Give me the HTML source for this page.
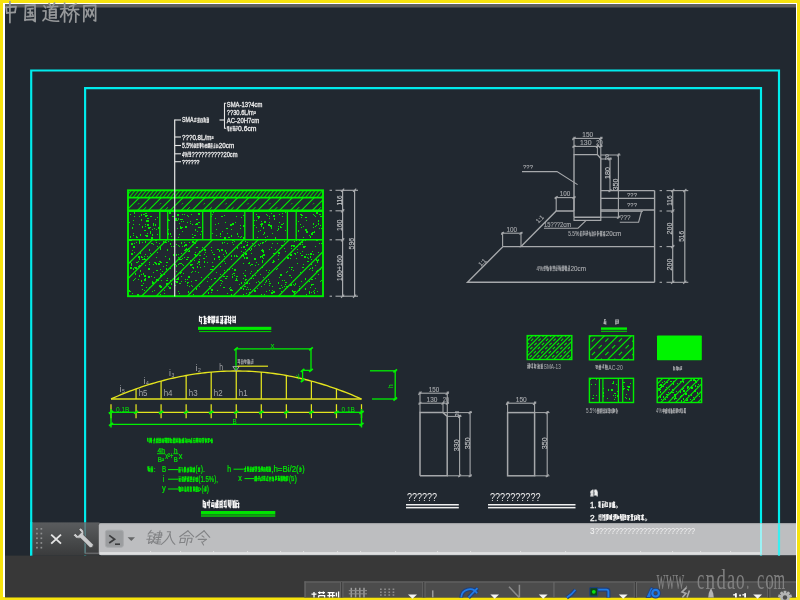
<!DOCTYPE html>
<html><head><meta charset="utf-8"><title>CAD</title>
<style>
html,body{margin:0;padding:0;width:800px;height:600px;overflow:hidden;background:#f7e30e;font-family:"Liberation Sans",sans-serif;}
svg{position:absolute;left:0;top:0;display:block;will-change:transform}
text{white-space:pre}
</style></head><body>
<svg width="800" height="600" viewBox="0 0 800 600">
<rect x="0" y="0" width="800" height="600" fill="#f7e30e"/>
<rect x="3" y="3" width="794" height="594" fill="#ffffff"/>
<rect x="5" y="4.3" width="791" height="593" fill="#212830"/>
<rect x="5" y="4.3" width="791" height="3.2" fill="#5e5e5e"/>
<g fill="none" stroke="#00ecec" stroke-width="2.15">
<polyline points="31.2,556 31.2,70.5 779,70.5 779,556"/>
<polyline points="85.1,556 85.1,88.1 761,88.1 761,556"/>
</g>
<clipPath id="c1"><rect x="128" y="190.3" width="195" height="7.299999999999983"/></clipPath>
<g clip-path="url(#c1)" stroke="#00d200" stroke-width="1.05"><line x1="116.40" y1="199.60" x2="125.44" y2="188.30"/><line x1="120.15" y1="199.60" x2="129.19" y2="188.30"/><line x1="123.90" y1="199.60" x2="132.94" y2="188.30"/><line x1="127.65" y1="199.60" x2="136.69" y2="188.30"/><line x1="131.40" y1="199.60" x2="140.44" y2="188.30"/><line x1="135.15" y1="199.60" x2="144.19" y2="188.30"/><line x1="138.90" y1="199.60" x2="147.94" y2="188.30"/><line x1="142.65" y1="199.60" x2="151.69" y2="188.30"/><line x1="146.40" y1="199.60" x2="155.44" y2="188.30"/><line x1="150.15" y1="199.60" x2="159.19" y2="188.30"/><line x1="153.90" y1="199.60" x2="162.94" y2="188.30"/><line x1="157.65" y1="199.60" x2="166.69" y2="188.30"/><line x1="161.40" y1="199.60" x2="170.44" y2="188.30"/><line x1="165.15" y1="199.60" x2="174.19" y2="188.30"/><line x1="168.90" y1="199.60" x2="177.94" y2="188.30"/><line x1="172.65" y1="199.60" x2="181.69" y2="188.30"/><line x1="176.40" y1="199.60" x2="185.44" y2="188.30"/><line x1="180.15" y1="199.60" x2="189.19" y2="188.30"/><line x1="183.90" y1="199.60" x2="192.94" y2="188.30"/><line x1="187.65" y1="199.60" x2="196.69" y2="188.30"/><line x1="191.40" y1="199.60" x2="200.44" y2="188.30"/><line x1="195.15" y1="199.60" x2="204.19" y2="188.30"/><line x1="198.90" y1="199.60" x2="207.94" y2="188.30"/><line x1="202.65" y1="199.60" x2="211.69" y2="188.30"/><line x1="206.40" y1="199.60" x2="215.44" y2="188.30"/><line x1="210.15" y1="199.60" x2="219.19" y2="188.30"/><line x1="213.90" y1="199.60" x2="222.94" y2="188.30"/><line x1="217.65" y1="199.60" x2="226.69" y2="188.30"/><line x1="221.40" y1="199.60" x2="230.44" y2="188.30"/><line x1="225.15" y1="199.60" x2="234.19" y2="188.30"/><line x1="228.90" y1="199.60" x2="237.94" y2="188.30"/><line x1="232.65" y1="199.60" x2="241.69" y2="188.30"/><line x1="236.40" y1="199.60" x2="245.44" y2="188.30"/><line x1="240.15" y1="199.60" x2="249.19" y2="188.30"/><line x1="243.90" y1="199.60" x2="252.94" y2="188.30"/><line x1="247.65" y1="199.60" x2="256.69" y2="188.30"/><line x1="251.40" y1="199.60" x2="260.44" y2="188.30"/><line x1="255.15" y1="199.60" x2="264.19" y2="188.30"/><line x1="258.90" y1="199.60" x2="267.94" y2="188.30"/><line x1="262.65" y1="199.60" x2="271.69" y2="188.30"/><line x1="266.40" y1="199.60" x2="275.44" y2="188.30"/><line x1="270.15" y1="199.60" x2="279.19" y2="188.30"/><line x1="273.90" y1="199.60" x2="282.94" y2="188.30"/><line x1="277.65" y1="199.60" x2="286.69" y2="188.30"/><line x1="281.40" y1="199.60" x2="290.44" y2="188.30"/><line x1="285.15" y1="199.60" x2="294.19" y2="188.30"/><line x1="288.90" y1="199.60" x2="297.94" y2="188.30"/><line x1="292.65" y1="199.60" x2="301.69" y2="188.30"/><line x1="296.40" y1="199.60" x2="305.44" y2="188.30"/><line x1="300.15" y1="199.60" x2="309.19" y2="188.30"/><line x1="303.90" y1="199.60" x2="312.94" y2="188.30"/><line x1="307.65" y1="199.60" x2="316.69" y2="188.30"/><line x1="311.40" y1="199.60" x2="320.44" y2="188.30"/><line x1="315.15" y1="199.60" x2="324.19" y2="188.30"/><line x1="318.90" y1="199.60" x2="327.94" y2="188.30"/><line x1="322.65" y1="199.60" x2="331.69" y2="188.30"/></g>
<clipPath id="c2"><rect x="128" y="197.6" width="195" height="13.200000000000017"/></clipPath>
<g clip-path="url(#c2)" stroke="#00f000" stroke-width="1.1"><line x1="113.24" y1="212.80" x2="130.44" y2="195.60"/><line x1="124.17" y1="212.80" x2="141.37" y2="195.60"/><line x1="135.10" y1="212.80" x2="152.30" y2="195.60"/><line x1="146.03" y1="212.80" x2="163.23" y2="195.60"/><line x1="156.96" y1="212.80" x2="174.16" y2="195.60"/><line x1="167.89" y1="212.80" x2="185.09" y2="195.60"/><line x1="178.82" y1="212.80" x2="196.02" y2="195.60"/><line x1="189.75" y1="212.80" x2="206.95" y2="195.60"/><line x1="200.68" y1="212.80" x2="217.88" y2="195.60"/><line x1="211.61" y1="212.80" x2="228.81" y2="195.60"/><line x1="222.54" y1="212.80" x2="239.74" y2="195.60"/><line x1="233.47" y1="212.80" x2="250.67" y2="195.60"/><line x1="244.40" y1="212.80" x2="261.60" y2="195.60"/><line x1="255.33" y1="212.80" x2="272.53" y2="195.60"/><line x1="266.26" y1="212.80" x2="283.46" y2="195.60"/><line x1="277.19" y1="212.80" x2="294.39" y2="195.60"/><line x1="288.12" y1="212.80" x2="305.32" y2="195.60"/><line x1="299.05" y1="212.80" x2="316.25" y2="195.60"/><line x1="309.98" y1="212.80" x2="327.18" y2="195.60"/><line x1="320.91" y1="212.80" x2="338.11" y2="195.60"/></g>
<clipPath id="c3"><rect x="128" y="197.6" width="195" height="13.200000000000017"/></clipPath>
<g clip-path="url(#c3)" stroke="#00f000" stroke-width="1.0" stroke-dasharray="0 3 5 20"><line x1="118.64" y1="212.80" x2="135.84" y2="195.60"/><line x1="140.50" y1="212.80" x2="157.70" y2="195.60"/><line x1="162.36" y1="212.80" x2="179.56" y2="195.60"/><line x1="184.22" y1="212.80" x2="201.42" y2="195.60"/><line x1="206.08" y1="212.80" x2="223.28" y2="195.60"/><line x1="227.94" y1="212.80" x2="245.14" y2="195.60"/><line x1="249.80" y1="212.80" x2="267.00" y2="195.60"/><line x1="271.66" y1="212.80" x2="288.86" y2="195.60"/><line x1="293.52" y1="212.80" x2="310.72" y2="195.60"/><line x1="315.38" y1="212.80" x2="332.58" y2="195.60"/></g>
<clipPath id="c4"><rect x="128" y="197.6" width="195" height="13.200000000000017"/></clipPath>
<g clip-path="url(#c4)" stroke="#00f000" stroke-width="1.0" stroke-dasharray="0 12 1.6 20"><line x1="129.57" y1="212.80" x2="146.77" y2="195.60"/><line x1="151.43" y1="212.80" x2="168.63" y2="195.60"/><line x1="173.29" y1="212.80" x2="190.49" y2="195.60"/><line x1="195.15" y1="212.80" x2="212.35" y2="195.60"/><line x1="217.01" y1="212.80" x2="234.21" y2="195.60"/><line x1="238.87" y1="212.80" x2="256.07" y2="195.60"/><line x1="260.73" y1="212.80" x2="277.93" y2="195.60"/><line x1="282.59" y1="212.80" x2="299.79" y2="195.60"/><line x1="304.45" y1="212.80" x2="321.65" y2="195.60"/></g>
<path fill="#00e800" d="M211 216h1v1h-1zM141 214h1v2h-1zM153 223h1v1h-1zM258 218h1v1h-1zM240 225h1v1h-1zM152 229h1v1h-1zM273 215h2v2h-2zM290 232h1v1h-1zM144 230h1v1h-1zM141 219h1v1h-1zM163 221h1v1h-1zM267 215h1v1h-1zM272 233h1v1h-1zM277 230h1v1h-1zM224 215h1v1h-1zM145 230h1v1h-1zM181 227h2v1h-2zM238 236h1v1h-1zM278 226h1v1h-1zM192 237h1v1h-1zM191 214h1v1h-1zM263 227h1v2h-1zM315 226h1v1h-1zM147 215h1v1h-1zM171 236h1v1h-1zM254 225h1v1h-1zM300 214h2v1h-2zM275 237h1v2h-1zM209 222h2v1h-2zM281 227h1v1h-1zM245 214h1v2h-1zM198 227h2v1h-2zM145 213h2v1h-2zM208 232h1v1h-1zM303 226h1v1h-1zM227 233h1v1h-1zM247 223h1v1h-1zM158 227h1v1h-1zM202 216h2v1h-2zM230 224h2v2h-2zM256 214h1v1h-1zM231 229h1v1h-1zM164 225h1v2h-1zM200 234h1v1h-1zM220 233h1v2h-1zM188 216h1v1h-1zM167 219h1v1h-1zM132 227h1v2h-1zM175 220h1v1h-1zM166 225h1v1h-1zM285 230h1v1h-1zM161 234h1v2h-1zM287 232h2v1h-2zM142 226h1v2h-1zM303 237h1v1h-1zM230 224h1v1h-1zM252 232h1v1h-1zM177 214h2v2h-2zM241 217h1v1h-1zM282 213h1v1h-1zM274 216h1v1h-1zM222 231h1v1h-1zM182 231h1v1h-1zM291 220h2v2h-2zM283 223h1v1h-1zM158 227h2v2h-2zM248 227h1v1h-1zM150 216h1v1h-1zM216 235h1v1h-1zM306 217h1v1h-1zM181 228h1v1h-1zM305 229h2v2h-2zM264 221h2v2h-2zM152 234h1v2h-1zM261 223h2v2h-2zM220 236h1v1h-1zM267 236h1v1h-1zM291 219h1v1h-1zM178 237h1v1h-1zM231 235h1v2h-1zM180 228h1v1h-1zM316 212h2v2h-2zM200 227h1v1h-1zM306 231h2v2h-2zM243 237h2v2h-2zM218 223h1v1h-1zM155 219h1v1h-1zM215 218h1v1h-1zM285 212h1v1h-1zM296 223h1v2h-1zM150 233h1v1h-1zM228 237h2v1h-2zM180 227h1v2h-1zM240 237h1v1h-1zM151 237h2v2h-2zM313 224h1v1h-1zM319 214h2v1h-2zM172 216h1v1h-1zM280 226h1v2h-1zM166 231h1v2h-1zM250 233h2v2h-2zM168 229h1v1h-1zM134 212h1v2h-1zM314 232h1v1h-1zM320 216h1v1h-1zM178 218h1v1h-1zM183 221h1v1h-1zM279 222h1v1h-1zM236 216h1v1h-1zM318 223h1v2h-1zM298 230h1v2h-1zM261 225h1v2h-1zM257 216h1v1h-1zM263 228h1v1h-1zM241 236h1v1h-1zM130 236h1v2h-1zM173 216h1v1h-1zM314 215h1v1h-1zM212 233h1v1h-1zM271 227h1v2h-1zM156 229h1v1h-1zM177 220h1v1h-1zM154 228h1v1h-1zM136 236h1v2h-1zM145 226h1v1h-1zM258 231h1v1h-1zM306 220h1v1h-1zM265 237h1v1h-1zM192 234h1v1h-1zM195 229h1v2h-1zM180 226h1v1h-1zM160 224h1v1h-1zM147 233h1v1h-1zM147 218h2v1h-2zM160 236h1v1h-1zM312 232h2v1h-2zM165 220h1v2h-1zM248 219h2v1h-2zM153 224h1v2h-1zM170 233h1v2h-1zM170 234h1v1h-1zM260 224h1v1h-1zM179 223h1v1h-1zM313 223h1v1h-1zM270 226h1v1h-1zM133 224h1v1h-1zM288 221h1v1h-1zM145 215h2v2h-2zM187 215h1v1h-1zM198 213h2v2h-2zM175 220h2v1h-2zM237 233h1v2h-1zM195 224h1v1h-1zM260 230h1v1h-1zM212 214h1v1h-1zM305 217h1v1h-1zM147 220h2v2h-2zM291 214h1v2h-1zM150 231h1v2h-1zM146 220h1v2h-1zM245 212h1v1h-1zM270 225h2v2h-2zM197 231h1v1h-1zM263 234h1v1h-1zM157 217h1v1h-1zM175 218h2v2h-2zM289 221h1v1h-1zM181 221h1v1h-1zM301 217h1v1h-1zM133 220h1v1h-1zM133 235h1v1h-1zM177 228h1v1h-1zM243 215h1v1h-1zM295 225h1v1h-1zM268 224h2v2h-2zM207 234h1v1h-1zM187 222h1v1h-1zM309 235h1v1h-1zM232 223h2v2h-2zM162 212h1v1h-1zM318 220h1v1h-1zM143 214h2v1h-2zM226 228h2v1h-2zM201 231h1v1h-1zM204 213h1v1h-1zM169 220h1v1h-1zM196 223h2v2h-2zM269 222h1v1h-1zM208 218h1v1h-1zM129 222h1v1h-1zM250 220h1v1h-1zM180 219h1v1h-1zM130 214h1v1h-1zM151 216h1v1h-1zM139 224h1v1h-1zM206 232h1v1h-1zM278 228h1v2h-1zM168 233h1v2h-1zM281 224h2v1h-2zM313 227h1v1h-1zM314 231h1v1h-1zM140 234h1v2h-1zM289 225h2v1h-2zM258 216h2v2h-2zM321 228h1v1h-1zM133 233h1v1h-1zM311 233h2v2h-2zM293 219h1v1h-1zM139 216h1v1h-1zM155 224h1v2h-1zM271 213h1v1h-1zM289 229h2v1h-2zM254 220h1v1h-1zM146 235h2v2h-2zM266 214h1v1h-1zM145 235h2v1h-2zM193 237h1v1h-1zM196 219h2v1h-2zM181 219h2v1h-2zM246 227h1v2h-1zM148 227h2v2h-2zM202 236h1v1h-1zM290 232h1v1h-1zM282 216h1v1h-1zM295 235h2v1h-2zM288 230h1v1h-1zM252 213h1v1h-1zM301 215h2v1h-2zM301 227h1v1h-1zM261 221h1v1h-1zM248 236h1v1h-1zM269 218h1v1h-1zM150 227h1v1h-1zM246 214h1v2h-1zM244 220h1v1h-1zM182 214h1v1h-1zM165 235h1v1h-1zM221 216h1v1h-1zM290 228h1v1h-1zM157 234h1v1h-1zM256 227h1v1h-1zM169 212h2v2h-2zM303 226h1v1h-1zM315 216h1v1h-1zM225 222h1v1h-1zM213 212h1v1h-1zM215 224h1v1h-1zM179 234h1v1h-1zM318 221h1v1h-1zM145 224h1v1h-1zM279 214h1v1h-1zM238 236h1v1h-1zM141 220h1v1h-1zM298 221h1v1h-1zM167 219h2v2h-2zM240 228h1v1h-1zM224 237h2v2h-2zM136 237h2v1h-2zM231 229h1v1h-1zM313 214h1v1h-1zM316 225h1v1h-1zM321 216h1v1h-1zM202 227h1v1h-1zM269 216h1v1h-1zM235 222h1v1h-1zM194 235h2v1h-2zM296 220h1v1h-1zM190 221h1v1h-1zM300 224h1v1h-1zM293 217h1v1h-1zM257 237h1v1h-1zM185 226h2v2h-2zM244 225h1v1h-1zM178 219h1v1h-1zM216 229h1v1h-1zM190 223h1v1h-1zM274 218h1v2h-1zM320 225h1v1h-1zM319 228h1v1h-1zM198 222h2v1h-2zM256 220h1v1h-1zM221 216h2v1h-2zM264 232h1v2h-1zM184 214h1v1h-1zM192 224h1v1h-1zM243 225h2v2h-2zM134 216h1v1h-1zM310 236h1v2h-1zM250 230h1v1h-1zM147 224h2v2h-2z"/>
<rect x="159.80" y="210.80" width="7.90" height="29.00" fill="#212830" />
<line x1="159.80" y1="210.80" x2="159.80" y2="239.80" stroke="#00f000" stroke-width="1.3" />
<line x1="167.70" y1="210.80" x2="167.70" y2="239.80" stroke="#00f000" stroke-width="1.3" />
<rect x="202.70" y="210.80" width="8.20" height="29.00" fill="#212830" />
<line x1="202.70" y1="210.80" x2="202.70" y2="239.80" stroke="#00f000" stroke-width="1.3" />
<line x1="210.90" y1="210.80" x2="210.90" y2="239.80" stroke="#00f000" stroke-width="1.3" />
<rect x="244.80" y="210.80" width="8.50" height="29.00" fill="#212830" />
<line x1="244.80" y1="210.80" x2="244.80" y2="239.80" stroke="#00f000" stroke-width="1.3" />
<line x1="253.30" y1="210.80" x2="253.30" y2="239.80" stroke="#00f000" stroke-width="1.3" />
<rect x="287.40" y="210.80" width="8.80" height="29.00" fill="#212830" />
<line x1="287.40" y1="210.80" x2="287.40" y2="239.80" stroke="#00f000" stroke-width="1.3" />
<line x1="296.20" y1="210.80" x2="296.20" y2="239.80" stroke="#00f000" stroke-width="1.3" />
<clipPath id="c5"><rect x="128" y="239.8" width="195" height="56.39999999999998"/></clipPath>
<g clip-path="url(#c5)" stroke="#00f000" stroke-width="1.2"><line x1="48.40" y1="298.20" x2="108.80" y2="237.80"/><line x1="94.00" y1="298.20" x2="154.40" y2="237.80"/><line x1="139.60" y1="298.20" x2="200.00" y2="237.80"/><line x1="185.20" y1="298.20" x2="245.60" y2="237.80"/><line x1="230.80" y1="298.20" x2="291.20" y2="237.80"/><line x1="276.40" y1="298.20" x2="336.80" y2="237.80"/><line x1="322.00" y1="298.20" x2="382.40" y2="237.80"/><line x1="62.90" y1="298.20" x2="123.30" y2="237.80"/><line x1="108.50" y1="298.20" x2="168.90" y2="237.80"/><line x1="154.10" y1="298.20" x2="214.50" y2="237.80"/><line x1="199.70" y1="298.20" x2="260.10" y2="237.80"/><line x1="245.30" y1="298.20" x2="305.70" y2="237.80"/><line x1="290.90" y1="298.20" x2="351.30" y2="237.80"/><line x1="336.50" y1="298.20" x2="396.90" y2="237.80"/></g>
<path fill="#00e800" d="M264 294h1v1h-1zM243 255h1v2h-1zM186 249h1v1h-1zM303 246h2v2h-2zM313 284h1v1h-1zM246 245h1v1h-1zM139 240h1v2h-1zM188 276h2v2h-2zM294 285h1v1h-1zM161 280h1v1h-1zM291 267h2v1h-2zM157 246h1v1h-1zM263 277h1v1h-1zM195 254h1v2h-1zM129 240h1v1h-1zM246 257h2v2h-2zM294 293h1v2h-1zM250 273h1v1h-1zM192 241h2v2h-2zM309 281h1v1h-1zM134 252h1v1h-1zM301 281h1v1h-1zM194 254h2v1h-2zM223 254h1v1h-1zM307 261h2v1h-2zM221 283h1v1h-1zM130 291h1v1h-1zM258 244h1v1h-1zM180 259h2v1h-2zM178 254h1v1h-1zM196 288h1v2h-1zM156 279h1v1h-1zM176 254h1v1h-1zM299 243h2v2h-2zM166 265h1v1h-1zM135 278h1v1h-1zM142 285h1v1h-1zM229 268h1v2h-1zM209 286h1v1h-1zM149 250h1v1h-1zM176 281h2v2h-2zM320 269h1v1h-1zM299 286h1v1h-1zM224 261h1v1h-1zM156 240h1v1h-1zM149 262h1v1h-1zM160 275h2v2h-2zM182 264h1v1h-1zM208 292h1v2h-1zM151 243h2v1h-2zM179 263h1v1h-1zM243 252h1v1h-1zM317 270h1v1h-1zM234 255h1v2h-1zM232 242h1v1h-1zM247 244h1v2h-1zM144 256h1v1h-1zM145 278h1v1h-1zM198 261h2v2h-2zM286 242h1v1h-1zM312 284h1v1h-1zM199 259h1v1h-1zM281 291h1v1h-1zM145 241h1v2h-1zM156 270h2v1h-2zM248 289h1v1h-1zM193 267h1v2h-1zM162 271h1v1h-1zM318 259h1v2h-1zM167 278h1v1h-1zM210 269h1v1h-1zM281 245h1v1h-1zM229 288h1v1h-1zM233 244h1v1h-1zM252 275h1v1h-1zM170 267h1v2h-1zM147 256h1v1h-1zM182 246h1v1h-1zM310 268h1v1h-1zM163 266h1v1h-1zM301 255h2v1h-2zM299 288h1v1h-1zM204 258h1v1h-1zM197 263h1v1h-1zM195 252h1v1h-1zM176 255h1v1h-1zM201 277h1v1h-1zM145 265h1v1h-1zM191 272h1v1h-1zM295 291h1v1h-1zM247 242h1v1h-1zM250 292h1v1h-1zM243 263h1v1h-1zM204 254h1v1h-1zM177 278h2v2h-2zM278 252h2v2h-2zM224 272h1v2h-1zM243 278h1v1h-1zM299 240h1v1h-1zM281 285h1v1h-1zM184 242h1v1h-1zM165 242h1v1h-1zM194 242h1v1h-1zM295 253h1v2h-1zM212 266h2v1h-2zM176 279h1v1h-1zM181 242h1v2h-1zM269 270h1v1h-1zM154 290h1v1h-1zM269 249h1v1h-1zM152 281h1v1h-1zM307 257h1v1h-1zM201 282h1v1h-1zM142 259h2v1h-2zM220 266h1v1h-1zM222 281h1v1h-1zM315 265h1v1h-1zM130 267h2v2h-2zM237 247h1v2h-1zM232 276h1v2h-1zM246 289h1v1h-1zM132 243h1v1h-1zM293 291h2v2h-2zM151 276h1v1h-1zM223 287h1v1h-1zM166 262h1v1h-1zM262 250h2v2h-2zM156 264h1v1h-1zM179 259h1v1h-1zM140 270h1v1h-1zM284 280h1v1h-1zM311 279h2v1h-2zM170 280h1v2h-1zM185 279h1v1h-1zM179 293h1v1h-1zM273 253h1v1h-1zM261 250h1v1h-1zM160 249h1v1h-1zM314 292h1v2h-1zM139 275h1v2h-1zM301 242h2v1h-2zM211 247h1v1h-1zM245 275h1v2h-1zM207 281h1v1h-1zM278 255h1v1h-1zM297 263h1v1h-1zM241 251h1v1h-1zM287 271h1v1h-1zM243 288h1v1h-1zM246 293h1v1h-1zM250 265h1v1h-1zM161 262h1v1h-1zM152 291h1v1h-1zM259 282h1v1h-1zM291 248h1v1h-1zM316 260h2v1h-2zM259 245h1v1h-1zM258 264h1v1h-1zM163 241h1v2h-1zM286 286h2v1h-2zM157 252h1v1h-1zM254 258h2v2h-2zM171 283h1v2h-1zM185 244h1v2h-1zM285 288h1v1h-1zM211 279h1v1h-1zM245 249h1v1h-1zM251 253h1v1h-1zM286 272h1v1h-1zM224 242h1v1h-1zM232 250h1v1h-1zM200 283h1v1h-1zM225 250h1v2h-1zM196 247h2v1h-2zM141 280h1v2h-1zM244 275h1v1h-1zM305 246h1v1h-1zM266 280h1v2h-1zM317 291h1v1h-1zM225 263h1v1h-1zM221 261h2v1h-2zM242 254h1v1h-1zM319 243h1v1h-1zM261 256h1v1h-1zM278 282h1v2h-1zM316 240h2v1h-2zM185 249h1v1h-1zM289 267h1v1h-1zM222 243h1v1h-1zM187 279h1v1h-1zM134 243h1v1h-1zM219 259h1v1h-1zM220 274h1v1h-1zM278 259h1v1h-1zM181 263h1v1h-1zM250 250h1v1h-1zM191 285h1v1h-1zM153 244h1v1h-1zM299 290h1v1h-1zM196 240h1v1h-1zM272 262h1v1h-1zM277 268h1v1h-1zM261 286h1v1h-1zM171 240h1v1h-1zM265 241h1v1h-1zM189 250h1v1h-1zM155 240h1v1h-1zM297 252h1v1h-1zM180 273h1v1h-1zM258 281h1v1h-1zM285 251h1v1h-1zM145 259h1v1h-1zM314 290h1v1h-1zM266 240h1v1h-1zM240 287h2v2h-2zM149 287h1v1h-1zM173 254h2v2h-2zM195 254h1v1h-1zM160 261h1v2h-1zM306 294h1v1h-1zM142 257h1v1h-1zM302 267h2v1h-2zM262 256h1v1h-1zM184 245h1v2h-1zM132 250h1v1h-1zM189 293h2v1h-2zM169 287h2v2h-2zM178 264h1v1h-1zM190 264h2v2h-2zM290 284h2v2h-2zM266 270h1v1h-1zM264 284h1v1h-1zM135 267h2v2h-2zM188 276h1v2h-1zM183 265h1v1h-1zM148 276h2v2h-2zM166 242h1v1h-1zM156 279h2v2h-2zM217 249h2v1h-2zM136 242h1v1h-1zM293 280h1v1h-1zM146 287h1v1h-1zM280 288h1v1h-1zM265 282h1v1h-1zM311 264h1v1h-1zM181 253h1v1h-1zM137 294h2v2h-2zM321 280h1v1h-1zM321 280h1v1h-1zM251 246h1v1h-1zM294 253h1v1h-1zM215 267h1v1h-1zM218 256h2v2h-2zM141 285h2v1h-2zM211 289h2v2h-2zM257 270h1v2h-1zM287 287h1v1h-1zM234 241h1v1h-1zM154 262h1v1h-1zM141 274h1v1h-1zM311 292h1v1h-1zM202 250h1v1h-1zM263 252h1v1h-1zM321 243h1v1h-1zM254 246h1v1h-1zM176 271h1v1h-1zM260 256h1v1h-1zM169 258h1v2h-1zM308 254h1v1h-1zM157 280h2v1h-2zM254 290h2v2h-2zM272 290h1v1h-1zM212 262h1v1h-1zM230 287h1v1h-1zM294 241h1v1h-1zM206 256h1v1h-1zM268 272h1v1h-1zM290 254h2v2h-2zM161 274h1v1h-1zM305 288h1v1h-1zM137 262h1v1h-1zM262 249h1v2h-1zM244 282h1v1h-1zM211 250h1v1h-1zM305 289h1v1h-1zM188 248h1v1h-1zM293 284h1v1h-1zM178 257h1v1h-1zM309 292h1v2h-1zM168 286h1v1h-1zM192 286h1v1h-1zM262 262h1v1h-1zM212 252h1v1h-1zM315 246h1v1h-1zM297 246h1v1h-1zM167 249h1v2h-1zM316 259h1v1h-1zM179 246h1v1h-1zM156 257h1v1h-1zM228 269h1v1h-1zM231 294h1v2h-1zM306 254h1v1h-1zM290 258h1v1h-1zM165 256h1v1h-1zM232 240h2v1h-2zM239 284h1v1h-1zM320 281h1v1h-1zM187 282h2v1h-2zM293 284h1v1h-1zM187 283h1v1h-1zM160 269h1v1h-1zM195 280h2v1h-2zM236 255h1v2h-1zM311 285h1v1h-1zM193 294h1v1h-1zM245 241h1v1h-1zM233 273h2v1h-2zM175 281h1v1h-1zM131 264h1v2h-1zM156 242h1v1h-1zM184 250h2v1h-2zM180 273h1v1h-1zM276 269h1v1h-1zM312 270h1v1h-1zM292 290h1v2h-1zM262 261h1v1h-1zM245 253h2v2h-2zM176 265h1v1h-1zM160 286h2v2h-2zM220 280h1v1h-1zM199 264h1v1h-1zM132 244h1v1h-1zM236 280h2v1h-2zM219 277h1v1h-1zM186 259h2v1h-2zM263 254h2v2h-2zM229 269h1v1h-1zM162 289h1v1h-1zM291 252h1v1h-1zM272 286h1v1h-1zM166 262h2v1h-2zM234 269h2v2h-2zM269 281h1v1h-1zM249 262h1v2h-1zM187 257h2v1h-2zM304 256h2v2h-2zM302 251h1v1h-1zM313 291h1v1h-1zM191 281h1v1h-1zM251 271h1v1h-1zM292 245h1v1h-1zM221 249h2v2h-2zM227 243h1v1h-1zM273 260h1v2h-1zM164 273h1v2h-1zM291 277h1v1h-1zM131 253h2v2h-2zM296 258h1v1h-1zM154 277h1v1h-1zM188 251h2v1h-2zM217 290h1v1h-1zM232 290h1v1h-1zM285 284h1v1h-1zM152 282h2v2h-2zM269 290h1v1h-1zM205 252h1v1h-1zM183 273h1v1h-1zM241 282h1v2h-1zM271 247h1v1h-1zM188 292h1v1h-1zM255 275h1v1h-1zM248 249h2v1h-2zM192 271h1v1h-1zM282 287h1v1h-1zM211 269h2v1h-2zM256 282h1v1h-1zM248 263h1v1h-1zM302 244h1v1h-1zM221 280h1v1h-1zM134 279h1v1h-1zM317 261h1v2h-1zM153 272h1v1h-1zM165 242h1v1h-1zM235 280h1v1h-1zM153 282h1v1h-1zM250 289h1v1h-1zM182 258h1v1h-1zM237 256h1v1h-1zM203 258h1v1h-1zM255 265h1v1h-1zM198 272h1v1h-1zM181 281h1v1h-1zM159 261h1v1h-1zM311 259h1v1h-1zM291 245h1v2h-1zM139 265h2v1h-2zM232 274h1v1h-1zM231 259h1v1h-1zM140 252h1v2h-1zM250 278h2v1h-2zM144 290h1v1h-1zM268 279h1v1h-1zM166 280h2v1h-2zM305 278h1v2h-1zM150 253h1v1h-1zM291 269h1v1h-1zM173 246h2v1h-2zM138 266h2v1h-2zM296 240h1v1h-1zM164 290h1v1h-1zM310 256h1v2h-1zM176 266h1v1h-1zM134 267h1v1h-1zM277 243h1v1h-1zM262 242h1v2h-1zM236 276h2v1h-2zM232 268h1v1h-1zM303 264h1v1h-1zM297 249h1v1h-1zM234 275h1v1h-1zM293 270h1v1h-1zM167 280h1v1h-1zM130 240h2v1h-2zM160 294h1v1h-1zM160 248h1v1h-1zM199 286h1v1h-1zM244 286h2v1h-2zM141 263h2v1h-2zM311 284h1v2h-1zM315 288h1v1h-1zM289 275h2v1h-2zM246 282h2v2h-2zM194 243h2v1h-2zM131 243h1v1h-1zM295 283h1v2h-1zM149 264h1v1h-1zM315 278h1v1h-1zM253 278h1v1h-1zM223 276h2v1h-2zM249 283h1v1h-1zM158 263h2v2h-2zM170 280h1v2h-1zM251 264h2v1h-2zM244 257h1v2h-1zM274 261h1v1h-1zM144 279h2v2h-2zM309 291h1v2h-1zM214 278h2v1h-2zM132 293h1v1h-1zM208 277h1v1h-1zM192 264h1v1h-1zM225 278h2v1h-2zM188 291h1v1h-1zM305 240h1v1h-1zM197 267h1v1h-1zM139 258h1v2h-1zM275 249h1v1h-1zM269 283h2v1h-2zM256 262h1v1h-1zM267 275h1v1h-1zM226 252h1v2h-1zM313 254h1v1h-1zM143 283h1v1h-1zM310 253h2v2h-2zM279 288h1v1h-1zM227 269h1v1h-1zM266 291h1v1h-1zM145 254h1v1h-1zM262 256h1v2h-1zM262 260h1v1h-1zM279 252h1v1h-1zM178 245h1v1h-1zM308 258h1v1h-1zM273 262h1v1h-1zM261 294h1v1h-1zM140 271h1v1h-1zM156 263h1v1h-1zM149 249h1v1h-1zM136 262h1v1h-1zM284 241h1v1h-1zM181 276h1v1h-1zM274 253h1v1h-1zM200 267h1v1h-1zM243 289h1v1h-1zM284 248h1v1h-1zM138 261h1v1h-1zM175 264h1v1h-1zM142 242h1v1h-1zM309 269h1v1h-1zM145 278h1v1h-1zM159 285h2v2h-2zM194 260h1v1h-1zM293 245h2v2h-2zM300 272h1v1h-1zM243 294h1v1h-1zM189 286h1v1h-1zM138 256h2v2h-2zM144 275h2v2h-2zM141 256h1v2h-1zM310 287h1v1h-1zM252 243h1v1h-1zM210 288h1v1h-1zM179 283h2v1h-2zM279 277h1v1h-1zM296 246h1v1h-1zM224 256h1v1h-1zM224 270h1v1h-1zM241 255h1v2h-1zM302 240h1v1h-1zM178 291h1v1h-1zM185 244h2v2h-2zM224 287h1v1h-1zM243 246h2v2h-2zM227 293h1v1h-1zM148 268h2v2h-2zM211 292h1v1h-1zM158 280h1v1h-1zM213 254h2v1h-2zM175 285h1v1h-1zM166 268h1v2h-1zM197 266h1v1h-1zM168 241h1v1h-1zM204 261h1v2h-1zM195 271h1v1h-1zM245 270h1v1h-1zM260 243h1v1h-1zM300 253h1v1h-1zM202 247h1v1h-1zM180 263h1v1h-1zM195 255h2v2h-2zM153 264h1v1h-1zM170 243h1v2h-1zM204 249h2v2h-2zM133 268h1v2h-1zM216 272h1v1h-1zM129 290h1v2h-1zM263 258h1v1h-1zM240 242h2v2h-2zM184 257h1v1h-1zM164 293h1v1h-1zM187 285h1v1h-1zM282 245h1v2h-1zM284 286h1v1h-1zM199 251h1v1h-1zM285 282h2v1h-2zM178 277h1v1h-1zM131 244h2v1h-2zM262 266h1v2h-1zM143 273h1v2h-1zM214 258h1v2h-1zM255 245h1v1h-1zM251 248h1v2h-1zM197 255h1v1h-1zM222 242h1v1h-1zM224 276h1v1h-1zM130 262h1v1h-1zM243 273h1v1h-1zM220 285h1v1h-1zM211 289h2v1h-2zM226 276h2v1h-2zM144 258h1v2h-1zM316 271h1v1h-1zM135 273h1v2h-1zM163 241h1v1h-1zM151 254h1v1h-1zM171 246h1v1h-1zM271 292h2v2h-2zM133 246h2v2h-2zM318 252h1v1h-1zM282 280h1v1h-1zM262 255h2v1h-2zM155 262h1v2h-1zM312 251h1v1h-1zM160 269h1v1h-1zM257 288h1v1h-1zM160 247h1v1h-1zM164 274h1v1h-1zM187 249h2v1h-2zM247 287h1v1h-1zM133 280h1v1h-1zM236 278h1v2h-1zM263 242h1v1h-1zM142 289h1v1h-1zM231 255h1v2h-1zM312 267h1v2h-1zM273 291h2v2h-2zM211 292h1v1h-1zM272 243h1v1h-1zM166 283h2v2h-2zM192 267h2v1h-2zM131 263h1v1h-1zM176 244h1v1h-1zM180 272h2v1h-2zM186 248h1v1h-1zM230 289h2v2h-2zM245 280h1v1h-1zM139 242h1v2h-1zM287 257h2v2h-2zM288 257h1v1h-1zM138 279h1v1h-1zM160 273h1v1h-1zM189 242h1v1h-1zM207 262h1v1h-1zM159 243h1v1h-1zM260 257h1v1h-1zM280 274h2v2h-2zM241 247h1v1h-1zM204 266h1v1h-1zM199 255h2v1h-2zM318 274h1v1h-1zM245 279h2v1h-2zM185 281h1v1h-1zM269 285h1v1h-1zM269 259h1v1h-1zM249 292h1v1h-1zM191 261h1v1h-1zM260 274h1v1h-1zM278 265h1v1h-1zM219 250h1v2h-1zM190 260h1v1h-1z"/>
<g fill="none" stroke="#00f000">
<rect x="128" y="190.3" width="195" height="105.89999999999998" stroke-width="1.9"/>
<line x1="128" y1="197.6" x2="323" y2="197.6" stroke-width="1.6"/>
<line x1="128" y1="210.8" x2="323" y2="210.8" stroke-width="2.5"/>
<line x1="128" y1="239.8" x2="323" y2="239.8" stroke-width="1.6"/>
</g>
<line x1="174.70" y1="119.60" x2="174.70" y2="296.50" stroke="#e6e6e6" stroke-width="1.2" />
<line x1="174.70" y1="120.00" x2="181.00" y2="120.00" stroke="#e6e6e6" stroke-width="1.1" />
<line x1="174.70" y1="137.00" x2="181.00" y2="137.00" stroke="#e6e6e6" stroke-width="1.1" />
<line x1="174.70" y1="145.50" x2="181.00" y2="145.50" stroke="#e6e6e6" stroke-width="1.1" />
<line x1="174.70" y1="153.80" x2="181.00" y2="153.80" stroke="#e6e6e6" stroke-width="1.1" />
<line x1="174.70" y1="161.70" x2="181.00" y2="161.70" stroke="#e6e6e6" stroke-width="1.1" />
<line x1="219.50" y1="120.00" x2="224.50" y2="120.00" stroke="#e6e6e6" stroke-width="1.1" />
<polyline points="226.20,103.20 224.50,103.20 224.50,128.20 226.20,128.20" fill="none" stroke="#e6e6e6" stroke-width="1.1" />
<text x="182.00" y="122.40" font-family="Liberation Sans" font-size="6.8" font-weight="normal" fill="#ededed" text-anchor="start" textLength="11.50" lengthAdjust="spacingAndGlyphs"  stroke="#ededed" stroke-width="0.28">SMA</text>
<path d="M194.82 119.09V122.27M195.85 117.50V121.21M194.05 118.46H196.55M194.05 121.53H196.55M198.20 117.50V122.27M199.17 117.50V122.27M197.15 118.75H199.65M197.15 120.65H198.90M197.15 122.40H199.65M200.47 119.09V122.27M202.42 119.09V122.80M200.25 118.43H202.75M201.00 119.21H202.75M201.00 120.87H202.75M200.25 122.28H202.00M204.00 117.50V122.80M204.47 117.50V121.21M205.53 118.30V122.80M203.35 118.08H205.10M203.35 121.66H205.10M207.21 117.50V122.80M208.55 117.50V122.27M206.45 117.80H208.20M206.45 119.63H208.95M206.45 121.10H208.95M206.45 122.44H208.95" fill="none" stroke="#ededed" stroke-width="0.75"/>
<text x="226.80" y="107.20" font-family="Liberation Sans" font-size="6.8" font-weight="normal" fill="#ededed" text-anchor="start" textLength="35.50" lengthAdjust="spacingAndGlyphs"  stroke="#ededed" stroke-width="0.28">SMA-13?4cm</text>
<text x="226.80" y="115.20" font-family="Liberation Sans" font-size="6.8" font-weight="normal" fill="#ededed" text-anchor="start" textLength="29.00" lengthAdjust="spacingAndGlyphs"  stroke="#ededed" stroke-width="0.28">??30.6L/m²</text>
<text x="226.80" y="123.20" font-family="Liberation Sans" font-size="6.8" font-weight="normal" fill="#ededed" text-anchor="start" textLength="32.50" lengthAdjust="spacingAndGlyphs"  stroke="#ededed" stroke-width="0.28">AC-20H7cm</text>
<path d="M227.33 126.00V129.71M228.29 126.00V131.30M228.84 126.00V131.30M227.05 127.24H228.59M227.71 130.67H229.25M230.39 126.80V131.30M231.17 127.59V129.71M230.51 127.03H232.05M229.85 128.76H232.05M230.51 130.85H232.05M233.10 126.00V129.71M234.20 126.00V131.30M232.65 126.30H234.85M232.65 128.29H234.85M233.31 129.23H234.85M232.65 130.47H234.85M235.79 127.59V131.30M237.12 126.00V129.71M235.45 126.37H237.65M235.45 128.86H237.65M235.45 130.36H236.99" fill="none" stroke="#ededed" stroke-width="0.75"/>
<text x="238.00" y="131.00" font-family="Liberation Sans" font-size="6.8" font-weight="normal" fill="#ededed" text-anchor="start" textLength="18.50" lengthAdjust="spacingAndGlyphs"  stroke="#ededed" stroke-width="0.28">0.6cm</text>
<text x="182.00" y="139.80" font-family="Liberation Sans" font-size="6.8" font-weight="normal" fill="#ededed" text-anchor="start" textLength="31.50" lengthAdjust="spacingAndGlyphs"  stroke="#ededed" stroke-width="0.28">???0.8L/m²</text>
<text x="182.00" y="148.00" font-family="Liberation Sans" font-size="6.8" font-weight="normal" fill="#ededed" text-anchor="start" textLength="11.50" lengthAdjust="spacingAndGlyphs"  stroke="#ededed" stroke-width="0.28">5.5%</text>
<path d="M194.29 143.00V148.30M195.63 143.79V147.77M194.50 144.16H196.03M193.85 146.06H196.03M193.85 147.38H196.03M196.95 143.00V148.30M197.93 143.00V147.77M197.28 143.99H198.81M196.63 145.13H198.81M196.63 147.60H198.81M200.01 143.00V147.77M200.47 143.00V148.30M201.17 143.79V146.71M199.41 143.28H201.58M199.41 145.02H201.58M200.06 146.24H201.58M200.06 147.72H200.93M202.35 143.00V146.71M204.17 144.59V147.77M202.18 143.96H203.71M202.84 144.70H203.71M202.18 146.26H204.36M202.18 147.77H203.71M205.66 144.59V148.30M206.94 143.79V147.77M204.96 144.32H207.14M204.96 145.62H207.14M205.61 147.57H207.14M208.06 144.59V148.30M208.91 143.00V147.77M209.70 143.00V148.30M207.74 143.75H209.92M207.74 144.60H209.92M207.74 146.33H209.92M207.74 147.44H209.26M210.91 144.59V148.30M212.08 143.00V146.71M210.52 143.60H212.04M210.52 144.98H212.04M210.52 146.34H212.69M210.52 147.93H212.69M214.11 144.59V148.30M214.95 144.59V147.77M213.95 143.83H215.47M213.29 147.74H215.47M216.64 144.59V148.30M218.01 144.59V147.77M216.07 144.25H217.60M216.73 145.80H218.25M216.07 147.40H218.25" fill="none" stroke="#ededed" stroke-width="0.75"/>
<text x="218.80" y="148.00" font-family="Liberation Sans" font-size="6.8" font-weight="normal" fill="#ededed" text-anchor="start" textLength="15.50" lengthAdjust="spacingAndGlyphs"  stroke="#ededed" stroke-width="0.28">20cm</text>
<text x="182.00" y="156.60" font-family="Liberation Sans" font-size="6.8" font-weight="normal" fill="#ededed" text-anchor="start" textLength="6.00" lengthAdjust="spacingAndGlyphs"  stroke="#ededed" stroke-width="0.28">4%</text>
<path d="M188.85 151.60V155.31M190.46 151.60V156.90M188.45 152.19H190.41M188.45 153.30H190.41M189.29 154.60H191.25M188.45 156.48H191.25" fill="none" stroke="#ededed" stroke-width="0.75"/>
<text x="191.50" y="156.60" font-family="Liberation Sans" font-size="6.8" font-weight="normal" fill="#ededed" text-anchor="start" textLength="46.00" lengthAdjust="spacingAndGlyphs"  stroke="#ededed" stroke-width="0.28">??????????20cm</text>
<text x="182.00" y="164.30" font-family="Liberation Sans" font-size="5.2" font-weight="normal" fill="#ededed" text-anchor="start" textLength="17.50" lengthAdjust="spacingAndGlyphs"  stroke="#ededed" stroke-width="0.28">??????</text>
<line x1="329.60" y1="190.30" x2="332.00" y2="190.30" stroke="#a9abae" stroke-width="1.1" />
<line x1="335.50" y1="190.30" x2="344.20" y2="190.30" stroke="#a9abae" stroke-width="1.1" />
<line x1="341.00" y1="191.90" x2="344.20" y2="188.70" stroke="#a9abae" stroke-width="1.1" />
<line x1="329.60" y1="210.80" x2="332.00" y2="210.80" stroke="#a9abae" stroke-width="1.1" />
<line x1="335.50" y1="210.80" x2="344.20" y2="210.80" stroke="#a9abae" stroke-width="1.1" />
<line x1="341.00" y1="212.40" x2="344.20" y2="209.20" stroke="#a9abae" stroke-width="1.1" />
<line x1="329.60" y1="239.80" x2="332.00" y2="239.80" stroke="#a9abae" stroke-width="1.1" />
<line x1="335.50" y1="239.80" x2="344.20" y2="239.80" stroke="#a9abae" stroke-width="1.1" />
<line x1="341.00" y1="241.40" x2="344.20" y2="238.20" stroke="#a9abae" stroke-width="1.1" />
<line x1="329.60" y1="296.20" x2="332.00" y2="296.20" stroke="#a9abae" stroke-width="1.1" />
<line x1="335.50" y1="296.20" x2="344.20" y2="296.20" stroke="#a9abae" stroke-width="1.1" />
<line x1="341.00" y1="297.80" x2="344.20" y2="294.60" stroke="#a9abae" stroke-width="1.1" />
<line x1="342.60" y1="190.30" x2="342.60" y2="296.20" stroke="#a9abae" stroke-width="1.2" />
<line x1="343.00" y1="190.30" x2="358.00" y2="190.30" stroke="#a9abae" stroke-width="1.1" />
<line x1="353.00" y1="191.90" x2="356.20" y2="188.70" stroke="#a9abae" stroke-width="1.1" />
<line x1="343.00" y1="296.20" x2="358.00" y2="296.20" stroke="#a9abae" stroke-width="1.1" />
<line x1="353.00" y1="297.80" x2="356.20" y2="294.60" stroke="#a9abae" stroke-width="1.1" />
<line x1="354.60" y1="190.30" x2="354.60" y2="296.20" stroke="#a9abae" stroke-width="1.2" />
<text x="0" y="0" font-family="Liberation Sans" font-size="7.6" fill="#bcbec0" stroke="#bcbec0" stroke-width="0.15" text-anchor="middle" textLength="10.00" lengthAdjust="spacingAndGlyphs" transform="translate(342.14 200.40) rotate(-90)">116</text>
<text x="0" y="0" font-family="Liberation Sans" font-size="7.6" fill="#bcbec0" stroke="#bcbec0" stroke-width="0.15" text-anchor="middle" textLength="11.50" lengthAdjust="spacingAndGlyphs" transform="translate(342.14 225.30) rotate(-90)">160</text>
<text x="0" y="0" font-family="Liberation Sans" font-size="7.6" fill="#bcbec0" stroke="#bcbec0" stroke-width="0.15" text-anchor="middle" textLength="26.00" lengthAdjust="spacingAndGlyphs" transform="translate(342.14 268.00) rotate(-90)">160+160</text>
<text x="0" y="0" font-family="Liberation Sans" font-size="7.6" fill="#bcbec0" stroke="#bcbec0" stroke-width="0.15" text-anchor="middle" textLength="11.50" lengthAdjust="spacingAndGlyphs" transform="translate(354.04 243.70) rotate(-90)">596</text>
<path d="M199.47 315.80V321.68M201.38 318.32V324.20M199.05 317.32H202.62M200.12 321.53H201.55M204.44 315.80V324.20M205.86 318.32V324.20M203.22 316.88H205.71M204.29 318.44H206.78M204.29 321.42H206.78M203.22 323.54H206.78M208.50 315.80V323.36M209.69 315.80V323.36M207.38 317.58H210.95M207.38 319.42H210.95M207.38 322.01H209.88M211.79 315.80V323.36M213.16 315.80V324.20M214.67 315.80V321.68M211.55 317.30H215.12M211.55 320.83H214.05M211.55 322.18H215.12M216.81 318.32V323.36M218.09 315.80V323.36M215.72 317.14H218.21M215.72 320.57H218.21M215.72 322.32H219.28M221.06 318.32V324.20M222.49 315.80V324.20M219.88 316.66H223.45M220.95 320.69H223.45M219.88 322.66H223.45M225.10 318.32V324.20M226.20 315.80V324.20M224.05 316.44H227.62M225.12 319.55H227.62M224.05 322.14H227.62M228.56 315.80V321.68M230.57 315.80V324.20M228.22 317.78H231.78M228.22 320.75H231.78M228.22 322.69H230.71M232.87 315.80V321.68M235.35 315.80V323.36M233.45 317.11H235.95M233.45 320.34H235.95M232.38 322.10H235.95" fill="none" stroke="#f6f6f6" stroke-width="1.15"/>
<rect x="198.00" y="326.80" width="73.30" height="3.10" fill="#00e800" />
<rect x="199.00" y="331.00" width="72.30" height="1.10" fill="#00c800" />
<polyline points="111.00,398.98 114.13,397.60 117.26,396.25 120.39,394.94 123.53,393.66 126.66,392.42 129.79,391.21 132.92,390.04 136.05,388.90 139.18,387.80 142.31,386.73 145.44,385.70 148.57,384.70 151.71,383.74 154.84,382.82 157.97,381.92 161.10,381.07 164.23,380.24 167.36,379.46 170.49,378.71 173.62,377.99 176.76,377.31 179.89,376.66 183.02,376.05 186.15,375.47 189.28,374.93 192.41,374.42 195.54,373.95 198.68,373.51 201.81,373.11 204.94,372.74 208.07,372.41 211.20,372.12 214.33,371.85 217.46,371.63 220.59,371.43 223.72,371.28 226.86,371.16 229.99,371.07 233.12,371.02 236.25,371.00 239.38,371.02 242.51,371.07 245.64,371.16 248.78,371.28 251.91,371.44 255.04,371.63 258.17,371.86 261.30,372.12 264.43,372.42 267.56,372.76 270.69,373.12 273.82,373.53 276.96,373.96 280.09,374.44 283.22,374.95 286.35,375.49 289.48,376.07 292.61,376.68 295.74,377.33 298.88,378.01 302.01,378.73 305.14,379.48 308.27,380.27 311.40,381.09 314.53,381.95 317.66,382.84 320.79,383.77 323.93,384.74 327.06,385.73 330.19,386.77 333.32,387.83 336.45,388.94 339.58,390.08 342.71,391.25 345.84,392.46 348.98,393.70 352.11,394.98 355.24,396.29 358.37,397.64 361.50,399.02" fill="none" stroke="#e4e41e" stroke-width="1.35" />
<line x1="111.00" y1="399.00" x2="361.50" y2="399.00" stroke="#e4e41e" stroke-width="1.35" />
<line x1="136.05" y1="388.90" x2="136.05" y2="399.00" stroke="#e4e41e" stroke-width="1.25" />
<line x1="161.10" y1="381.07" x2="161.10" y2="399.00" stroke="#e4e41e" stroke-width="1.25" />
<line x1="186.15" y1="375.47" x2="186.15" y2="399.00" stroke="#e4e41e" stroke-width="1.25" />
<line x1="211.20" y1="372.12" x2="211.20" y2="399.00" stroke="#e4e41e" stroke-width="1.25" />
<line x1="236.25" y1="371.00" x2="236.25" y2="399.00" stroke="#e4e41e" stroke-width="1.25" />
<line x1="261.30" y1="372.12" x2="261.30" y2="399.00" stroke="#e4e41e" stroke-width="1.25" />
<line x1="286.35" y1="375.49" x2="286.35" y2="399.00" stroke="#e4e41e" stroke-width="1.25" />
<line x1="311.40" y1="381.09" x2="311.40" y2="399.00" stroke="#e4e41e" stroke-width="1.25" />
<line x1="336.45" y1="388.94" x2="336.45" y2="399.00" stroke="#e4e41e" stroke-width="1.25" />
<line x1="111.00" y1="404.20" x2="111.00" y2="418.20" stroke="#e4e41e" stroke-width="1.25" />
<line x1="136.05" y1="404.20" x2="136.05" y2="418.20" stroke="#e4e41e" stroke-width="1.25" />
<line x1="161.10" y1="404.20" x2="161.10" y2="418.20" stroke="#e4e41e" stroke-width="1.25" />
<line x1="186.15" y1="404.20" x2="186.15" y2="418.20" stroke="#e4e41e" stroke-width="1.25" />
<line x1="211.20" y1="404.20" x2="211.20" y2="418.20" stroke="#e4e41e" stroke-width="1.25" />
<line x1="236.25" y1="404.20" x2="236.25" y2="418.20" stroke="#e4e41e" stroke-width="1.25" />
<line x1="261.30" y1="404.20" x2="261.30" y2="418.20" stroke="#e4e41e" stroke-width="1.25" />
<line x1="286.35" y1="404.20" x2="286.35" y2="418.20" stroke="#e4e41e" stroke-width="1.25" />
<line x1="311.40" y1="404.20" x2="311.40" y2="418.20" stroke="#e4e41e" stroke-width="1.25" />
<line x1="336.45" y1="404.20" x2="336.45" y2="418.20" stroke="#e4e41e" stroke-width="1.25" />
<line x1="361.50" y1="404.20" x2="361.50" y2="418.20" stroke="#e4e41e" stroke-width="1.25" />
<line x1="136.05" y1="412.30" x2="336.45" y2="412.30" stroke="#e4e41e" stroke-width="1.3" />
<line x1="111.00" y1="412.30" x2="136.05" y2="412.30" stroke="#00f000" stroke-width="1.3" />
<line x1="336.45" y1="412.30" x2="361.50" y2="412.30" stroke="#00f000" stroke-width="1.3" />
<line x1="111.00" y1="409.00" x2="111.00" y2="427.50" stroke="#00f000" stroke-width="1.4" />
<line x1="361.50" y1="409.00" x2="361.50" y2="427.50" stroke="#00f000" stroke-width="1.4" />
<line x1="111.00" y1="424.40" x2="361.50" y2="424.40" stroke="#00f000" stroke-width="1.4" />
<path d="M108.8 413.5 L113.2 411.1" stroke="#00f000" stroke-width="2"/>
<path d="M133.9 413.5 L138.2 411.1" stroke="#00f000" stroke-width="2"/>
<path d="M158.9 413.5 L163.3 411.1" stroke="#00f000" stroke-width="2"/>
<path d="M184.0 413.5 L188.3 411.1" stroke="#00f000" stroke-width="2"/>
<path d="M209.0 413.5 L213.4 411.1" stroke="#00f000" stroke-width="2"/>
<path d="M234.1 413.5 L238.4 411.1" stroke="#00f000" stroke-width="2"/>
<path d="M259.1 413.5 L263.5 411.1" stroke="#00f000" stroke-width="2"/>
<path d="M284.2 413.5 L288.6 411.1" stroke="#00f000" stroke-width="2"/>
<path d="M309.2 413.5 L313.6 411.1" stroke="#00f000" stroke-width="2"/>
<path d="M334.3 413.5 L338.7 411.1" stroke="#00f000" stroke-width="2"/>
<path d="M359.3 413.5 L363.7 411.1" stroke="#00f000" stroke-width="2"/>
<path d="M109.0 425.8 L113.0 423.0" stroke="#00f000" stroke-width="1.8"/>
<path d="M359.5 425.8 L363.5 423.0" stroke="#00f000" stroke-width="1.8"/>
<text x="116.00" y="412.20" font-family="Liberation Sans" font-size="6.6" font-weight="normal" fill="#00f000" text-anchor="start" textLength="13.50" lengthAdjust="spacingAndGlyphs" >0.1B</text>
<text x="341.50" y="412.20" font-family="Liberation Sans" font-size="6.6" font-weight="normal" fill="#00f000" text-anchor="start" textLength="13.50" lengthAdjust="spacingAndGlyphs" >0.1B</text>
<text x="232.50" y="424.20" font-family="Liberation Sans" font-size="6.6" font-weight="normal" fill="#00f000" text-anchor="start" textLength="4.20" lengthAdjust="spacingAndGlyphs" >B</text>
<polyline points="236.00,371.00 236.00,348.80 311.00,348.80 311.00,370.40 302.60,370.40 302.60,381.50" fill="none" stroke="#00f000" stroke-width="1.3" />
<path d="M234.2 350.3 L237.8 347.3" stroke="#00f000" stroke-width="1.7"/>
<path d="M309.2 350.3 L312.8 347.3" stroke="#00f000" stroke-width="1.7"/>
<path d="M309.2 371.9 L312.8 368.9" stroke="#00f000" stroke-width="1.7"/>
<path d="M300.8 371.9 L304.4 368.9" stroke="#00f000" stroke-width="1.7"/>
<path d="M300.8 382.0 L304.4 379.0" stroke="#00f000" stroke-width="1.7"/>
<text x="270.50" y="348.40" font-family="Liberation Sans" font-size="7" font-weight="normal" fill="#00f000" text-anchor="start" textLength="4.00" lengthAdjust="spacingAndGlyphs" >x</text>
<text x="297.50" y="378.50" font-family="Liberation Sans" font-size="6.5" font-weight="normal" fill="#00f000" text-anchor="start" textLength="3.60" lengthAdjust="spacingAndGlyphs" transform="rotate(-30 297.50 378.50)" >y</text>
<line x1="370.00" y1="370.80" x2="396.50" y2="370.80" stroke="#00f000" stroke-width="1.3" />
<line x1="372.00" y1="399.00" x2="396.50" y2="399.00" stroke="#00f000" stroke-width="1.3" />
<line x1="395.20" y1="370.80" x2="395.20" y2="399.00" stroke="#00f000" stroke-width="1.3" />
<path d="M393.4 372.3 L397.0 369.3" stroke="#00f000" stroke-width="1.7"/>
<path d="M393.4 400.5 L397.0 397.5" stroke="#00f000" stroke-width="1.7"/>
<text x="393.30" y="388.00" font-family="Liberation Sans" font-size="6.5" font-weight="normal" fill="#00f000" text-anchor="start" textLength="3.60" lengthAdjust="spacingAndGlyphs" transform="rotate(-90 393.30 388.00)" >h</text>
<polyline points="232.80,366.60 239.20,366.60 236.00,371.00 232.80,366.60" fill="none" stroke="#a4a6a8" stroke-width="1.0" />
<path d="M238.34 359.00V362.78M239.60 359.00V364.40M237.55 359.90H240.25M237.55 362.56H240.25M241.80 359.00V364.40M243.23 359.81V364.40M241.66 359.87H242.74M240.85 361.80H243.55M240.85 363.72H242.74M244.85 359.00V362.78M245.81 359.81V363.86M244.15 360.39H246.85M244.15 361.87H246.85M244.96 363.33H246.04M247.73 359.00V364.40M248.57 359.00V364.40M249.56 359.81V364.40M248.26 359.69H249.34M248.26 361.15H249.34M247.45 362.33H250.15M248.26 363.51H249.34M251.07 360.62V364.40M252.83 359.81V362.78M251.56 359.45H253.45M251.56 361.88H253.45M250.75 363.39H253.45" fill="none" stroke="#a4a6a8" stroke-width="0.75"/>
<line x1="237.50" y1="366.20" x2="268.00" y2="366.20" stroke="#e4e41e" stroke-width="1.2" />
<text x="138.65" y="396.00" font-family="Liberation Sans" font-size="9.6" font-weight="normal" fill="#a4a6a8" text-anchor="start" textLength="8.80" lengthAdjust="spacingAndGlyphs" >h5</text>
<text x="163.70" y="396.00" font-family="Liberation Sans" font-size="9.6" font-weight="normal" fill="#a4a6a8" text-anchor="start" textLength="8.80" lengthAdjust="spacingAndGlyphs" >h4</text>
<text x="188.75" y="396.00" font-family="Liberation Sans" font-size="9.6" font-weight="normal" fill="#a4a6a8" text-anchor="start" textLength="8.80" lengthAdjust="spacingAndGlyphs" >h3</text>
<text x="213.80" y="396.00" font-family="Liberation Sans" font-size="9.6" font-weight="normal" fill="#a4a6a8" text-anchor="start" textLength="8.80" lengthAdjust="spacingAndGlyphs" >h2</text>
<text x="238.85" y="396.00" font-family="Liberation Sans" font-size="9.6" font-weight="normal" fill="#a4a6a8" text-anchor="start" textLength="8.80" lengthAdjust="spacingAndGlyphs" >h1</text>
<text x="119.50" y="391.50" font-family="Liberation Sans" font-size="9" font-weight="normal" fill="#a4a6a8" text-anchor="start" textLength="1.90" lengthAdjust="spacingAndGlyphs" >i</text>
<text x="122.00" y="392.50" font-family="Liberation Sans" font-size="5" font-weight="normal" fill="#a4a6a8" text-anchor="start" >5</text>
<text x="143.50" y="383.80" font-family="Liberation Sans" font-size="9" font-weight="normal" fill="#a4a6a8" text-anchor="start" textLength="1.90" lengthAdjust="spacingAndGlyphs" >i</text>
<text x="146.00" y="384.80" font-family="Liberation Sans" font-size="5" font-weight="normal" fill="#a4a6a8" text-anchor="start" >4</text>
<text x="169.00" y="376.00" font-family="Liberation Sans" font-size="9" font-weight="normal" fill="#a4a6a8" text-anchor="start" textLength="1.90" lengthAdjust="spacingAndGlyphs" >i</text>
<text x="171.50" y="377.00" font-family="Liberation Sans" font-size="5" font-weight="normal" fill="#a4a6a8" text-anchor="start" >3</text>
<text x="195.50" y="370.80" font-family="Liberation Sans" font-size="9" font-weight="normal" fill="#a4a6a8" text-anchor="start" textLength="1.90" lengthAdjust="spacingAndGlyphs" >i</text>
<text x="198.00" y="371.80" font-family="Liberation Sans" font-size="5" font-weight="normal" fill="#a4a6a8" text-anchor="start" >2</text>
<text x="219.30" y="369.80" font-family="Liberation Sans" font-size="8.6" font-weight="normal" fill="#a4a6a8" text-anchor="start" textLength="3.80" lengthAdjust="spacingAndGlyphs" >h</text>
<path d="M147.49 437.80V441.58M149.29 437.80V443.20M147.25 438.99H148.84M147.93 441.09H149.52M150.56 437.80V442.66M151.56 437.80V443.20M150.12 439.21H151.71M150.12 440.70H152.39M150.80 441.92H151.71M153.79 439.42V441.58M154.48 437.80V441.58M153.67 439.20H155.26M153.67 440.97H154.58M152.99 442.82H155.26M156.22 438.61V443.20M156.95 437.80V443.20M157.98 437.80V443.20M156.54 439.53H158.13M155.86 441.97H158.13M159.06 437.80V443.20M160.30 437.80V442.66M158.73 439.21H161.00M158.73 440.45H161.00M158.73 442.55H161.00M161.98 438.61V442.66M162.79 439.42V441.58M163.30 438.61V443.20M161.60 439.04H163.87M161.60 441.02H163.87M161.60 442.18H163.87M164.97 437.80V442.66M165.78 437.80V442.66M166.47 437.80V443.20M164.47 438.33H166.74M164.47 440.51H166.06M165.15 442.03H166.74M167.79 437.80V443.20M168.29 437.80V442.66M169.24 437.80V441.58M167.34 438.70H168.93M168.02 442.31H169.61M170.42 437.80V442.66M171.12 438.61V443.20M171.96 439.42V441.58M170.21 439.66H171.80M170.21 442.37H172.48M173.28 438.61V443.20M174.01 437.80V443.20M175.10 437.80V443.20M173.08 438.33H174.66M173.76 439.58H175.35M173.08 441.03H174.66M173.08 442.65H175.35M176.32 439.42V442.66M176.85 437.80V442.66M177.96 437.80V443.20M176.63 439.43H177.53M175.95 441.40H178.22M179.37 437.80V443.20M179.73 438.61V443.20M180.67 439.42V443.20M178.82 439.11H181.08M178.82 440.91H180.40M178.82 441.86H180.40M182.04 439.42V443.20M182.74 438.61V442.66M183.52 437.80V443.20M181.68 439.06H183.27M181.68 440.59H183.95M181.68 442.30H183.95M185.16 437.80V442.66M186.60 438.61V443.20M185.24 438.63H186.14M185.24 440.81H186.14M184.55 441.95H186.82M187.85 438.61V443.20M189.28 438.61V442.66M187.42 439.82H189.69M187.42 441.40H189.69M190.63 439.42V443.20M191.72 437.80V443.20M190.97 438.68H191.88M190.29 440.93H191.88M190.29 442.09H192.56M193.45 439.42V441.58M195.04 439.42V442.66M193.16 438.64H195.43M193.16 440.83H195.43M193.16 442.63H195.43M196.29 437.80V442.66M197.08 437.80V441.58M197.85 437.80V443.20M196.03 438.78H198.30M196.03 440.68H198.30M196.03 441.87H198.30M199.12 438.61V441.58M199.83 439.42V442.66M200.90 438.61V443.20M198.90 438.72H201.17M198.90 441.70H201.17M201.95 438.61V441.58M202.97 437.80V443.20M203.73 437.80V441.58M201.77 438.49H203.36M202.45 440.89H203.36M202.45 442.20H204.04M205.27 437.80V441.58M205.55 439.42V443.20M206.68 438.61V442.66M204.64 439.17H206.91M205.32 441.37H206.91M208.28 438.61V442.66M208.85 438.61V441.58M207.51 438.53H209.78M207.51 439.68H209.78M208.19 441.37H209.78M207.51 442.39H209.10M210.61 439.42V441.58M211.62 438.61V443.20M212.29 439.42V443.20M211.06 438.98H212.65M210.38 440.60H212.65M211.06 442.59H211.97" fill="none" stroke="#00ee00" stroke-width="0.90"/>
<text x="157.50" y="452.60" font-family="Liberation Sans" font-size="7" font-weight="normal" fill="#00ee00" text-anchor="start" textLength="7.50" lengthAdjust="spacingAndGlyphs"  stroke="#00ee00" stroke-width="0.22">4h</text>
<line x1="157.00" y1="453.70" x2="165.20" y2="453.70" stroke="#00ee00" stroke-width="0.9" />
<text x="157.80" y="461.60" font-family="Liberation Sans" font-size="7" font-weight="normal" fill="#00ee00" text-anchor="start" textLength="6.20" lengthAdjust="spacingAndGlyphs"  stroke="#00ee00" stroke-width="0.22">B²</text>
<text x="165.30" y="458.60" font-family="Liberation Sans" font-size="8.4" font-weight="normal" fill="#00ee00" text-anchor="start" textLength="8.00" lengthAdjust="spacingAndGlyphs"  stroke="#00ee00" stroke-width="0.22">x²+</text>
<text x="174.00" y="452.60" font-family="Liberation Sans" font-size="7" font-weight="normal" fill="#00ee00" text-anchor="start" textLength="3.50" lengthAdjust="spacingAndGlyphs"  stroke="#00ee00" stroke-width="0.22">h</text>
<line x1="173.30" y1="453.70" x2="178.40" y2="453.70" stroke="#00ee00" stroke-width="0.9" />
<text x="173.80" y="461.60" font-family="Liberation Sans" font-size="7" font-weight="normal" fill="#00ee00" text-anchor="start" textLength="4.00" lengthAdjust="spacingAndGlyphs"  stroke="#00ee00" stroke-width="0.22">B</text>
<text x="178.80" y="458.60" font-family="Liberation Sans" font-size="8.4" font-weight="normal" fill="#00ee00" text-anchor="start" textLength="3.60" lengthAdjust="spacingAndGlyphs"  stroke="#00ee00" stroke-width="0.22">x</text>
<path d="M147.99 466.60V470.52M148.39 466.60V470.52M149.71 468.28V471.64M147.25 466.96H149.85M148.03 468.64H149.85M148.03 470.43H149.85M148.03 471.10H149.85M151.20 466.60V471.64M152.58 467.44V472.20M151.23 466.94H153.05M150.45 468.92H152.27M150.45 470.03H153.05M150.45 471.78H152.27" fill="none" stroke="#00ee00" stroke-width="0.90"/>
<text x="153.80" y="472.00" font-family="Liberation Sans" font-size="6.6" font-weight="normal" fill="#00ee00" text-anchor="start"  stroke="#00ee00" stroke-width="0.22">:</text>
<text x="162.00" y="472.20" font-family="Liberation Sans" font-size="8.6" font-weight="normal" fill="#00ee00" text-anchor="start" textLength="4.20" lengthAdjust="spacingAndGlyphs"  stroke="#00ee00" stroke-width="0.22">B</text>
<line x1="168.00" y1="469.60" x2="178.00" y2="469.60" stroke="#00ee00" stroke-width="1.0" />
<path d="M179.00 466.80V472.40M179.97 468.48V472.40M179.12 467.48H180.68M178.45 469.26H180.68M178.45 470.38H180.68M178.45 471.91H180.68M182.03 468.48V470.72M182.94 468.48V472.40M181.28 467.72H182.85M181.95 470.99H182.85M184.47 466.80V472.40M185.29 466.80V470.72M185.80 468.48V471.84M184.12 467.65H185.68M184.12 468.87H185.68M184.79 470.33H185.68M184.12 471.78H186.35M187.79 468.48V472.40M188.47 467.64V471.84M186.95 468.09H188.51M186.95 469.89H188.51M186.95 472.01H188.51M190.11 466.80V471.84M190.98 468.48V472.40M191.78 466.80V471.84M189.78 467.24H191.35M190.45 469.16H192.02M189.78 470.31H192.02M189.78 471.55H192.02M193.06 467.64V472.40M193.85 467.64V472.40M194.38 466.80V472.40M192.62 468.60H194.85M192.62 471.44H194.85" fill="none" stroke="#00ee00" stroke-width="0.90"/>
<text x="195.40" y="472.40" font-family="Liberation Sans" font-size="8.8" font-weight="normal" fill="#00ee00" text-anchor="start" textLength="2.00" lengthAdjust="spacingAndGlyphs"  stroke="#00ee00" stroke-width="0.22">(</text>
<path d="M198.47 467.61V471.66M199.60 467.61V471.66M197.85 468.06H200.25M198.57 469.78H199.53M197.85 471.48H200.25" fill="none" stroke="#00ee00" stroke-width="0.85"/>
<text x="200.80" y="472.40" font-family="Liberation Sans" font-size="8.8" font-weight="normal" fill="#00ee00" text-anchor="start" textLength="4.20" lengthAdjust="spacingAndGlyphs"  stroke="#00ee00" stroke-width="0.22">).</text>
<text x="162.80" y="482.00" font-family="Liberation Sans" font-size="8.6" font-weight="normal" fill="#00ee00" text-anchor="start" textLength="1.50" lengthAdjust="spacingAndGlyphs"  stroke="#00ee00" stroke-width="0.22">i</text>
<line x1="168.00" y1="479.20" x2="178.00" y2="479.20" stroke="#00ee00" stroke-width="1.0" />
<path d="M179.04 478.08V481.44M179.34 478.08V480.32M180.18 478.08V481.44M178.45 476.88H180.71M179.13 478.71H180.71M179.13 480.24H180.03M179.13 481.30H180.71M182.14 476.40V482.00M183.19 476.40V482.00M181.98 477.49H183.56M181.31 479.14H183.56M181.98 480.92H183.56M184.76 478.08V482.00M185.36 476.40V480.32M185.84 476.40V480.32M184.16 476.94H186.42M184.16 478.28H186.42M184.16 479.72H185.74M184.16 480.99H185.74M187.34 478.08V482.00M188.35 476.40V481.44M187.02 477.12H189.28M187.02 478.66H188.60M187.02 480.27H189.28M187.70 481.53H188.60M190.04 476.40V482.00M191.00 476.40V480.32M191.64 476.40V480.32M189.88 477.70H191.46M189.88 479.12H191.46M189.88 481.40H192.14M193.21 478.08V482.00M194.05 476.40V481.44M192.74 477.77H194.32M192.74 479.53H194.32M192.74 481.62H194.32M195.87 477.24V481.44M196.79 477.24V482.00M197.73 476.40V482.00M195.59 478.60H197.85M196.27 481.38H197.85" fill="none" stroke="#00ee00" stroke-width="0.90"/>
<text x="198.40" y="482.00" font-family="Liberation Sans" font-size="8.8" font-weight="normal" fill="#00ee00" text-anchor="start" textLength="19.50" lengthAdjust="spacingAndGlyphs"  stroke="#00ee00" stroke-width="0.22">(1.5%),</text>
<text x="162.00" y="491.40" font-family="Liberation Sans" font-size="8.6" font-weight="normal" fill="#00ee00" text-anchor="start" textLength="3.80" lengthAdjust="spacingAndGlyphs"  stroke="#00ee00" stroke-width="0.22">y</text>
<line x1="168.00" y1="489.00" x2="178.00" y2="489.00" stroke="#00ee00" stroke-width="1.0" />
<path d="M178.91 486.40V490.32M179.53 486.40V492.00M180.52 487.24V492.00M178.45 487.46H180.72M178.45 490.11H180.04M181.91 486.40V491.44M183.07 487.24V490.32M182.01 487.64H182.92M181.32 489.01H182.92M181.32 490.60H183.60M184.99 486.40V492.00M185.91 487.24V492.00M184.88 487.02H185.79M184.88 488.72H185.79M184.20 490.21H186.47M184.88 491.08H186.47M187.41 486.40V491.44M188.70 486.40V492.00M187.76 487.63H188.67M187.76 489.88H188.67M190.27 486.40V492.00M191.28 487.24V491.44M189.95 487.13H192.22M189.95 488.88H191.54M190.63 491.09H192.22M193.51 486.40V491.44M194.58 486.40V491.44M193.51 487.56H194.42M193.51 489.55H195.10M193.51 490.74H194.42M195.95 487.24V492.00M196.80 486.40V492.00M197.79 487.24V492.00M195.70 487.02H197.97M195.70 488.09H197.29M195.70 489.77H197.29M195.70 491.52H197.29M198.75 487.24V492.00M200.41 488.08V490.32M199.26 487.84H200.17M198.57 490.59H200.17" fill="none" stroke="#00ee00" stroke-width="0.90"/>
<text x="201.40" y="492.00" font-family="Liberation Sans" font-size="8.8" font-weight="normal" fill="#00ee00" text-anchor="start" textLength="2.00" lengthAdjust="spacingAndGlyphs"  stroke="#00ee00" stroke-width="0.22">(</text>
<path d="M204.05 488.02V491.80M205.26 486.40V491.80M206.10 486.40V491.26M204.57 487.10H205.53M204.57 489.54H205.53M204.57 490.55H206.25" fill="none" stroke="#00ee00" stroke-width="0.85"/>
<text x="206.80" y="492.00" font-family="Liberation Sans" font-size="8.8" font-weight="normal" fill="#00ee00" text-anchor="start" textLength="2.20" lengthAdjust="spacingAndGlyphs"  stroke="#00ee00" stroke-width="0.22">)</text>
<text x="227.20" y="471.80" font-family="Liberation Sans" font-size="8.6" font-weight="normal" fill="#00ee00" text-anchor="start" textLength="3.80" lengthAdjust="spacingAndGlyphs"  stroke="#00ee00" stroke-width="0.22">h</text>
<line x1="233.50" y1="469.20" x2="243.50" y2="469.20" stroke="#00ee00" stroke-width="1.0" />
<path d="M244.31 468.08V470.32M245.52 466.40V472.00M244.70 468.45H246.20M244.05 471.37H246.20M247.50 466.40V471.44M248.66 466.40V471.44M247.45 467.23H248.31M246.80 468.70H248.95M247.45 471.06H248.95M250.28 467.24V472.00M251.20 467.24V472.00M250.20 467.05H251.70M249.55 469.34H251.70M249.55 471.34H251.06M252.56 467.24V472.00M253.37 468.08V471.44M254.14 466.40V470.32M252.95 467.33H254.45M252.95 468.32H253.81M252.95 469.60H254.45M252.95 471.30H254.45M255.87 466.40V472.00M256.33 466.40V470.32M255.05 467.15H257.20M255.69 468.67H257.20M255.05 470.87H257.20M258.24 466.40V470.32M259.45 466.40V472.00M257.80 467.70H259.31M257.80 471.39H259.95M260.84 468.08V472.00M261.40 466.40V470.32M262.50 466.40V471.44M261.19 467.34H262.06M261.19 469.05H262.70M261.19 471.10H262.06M263.77 468.08V472.00M265.19 468.08V472.00M263.30 467.44H265.45M263.94 468.89H265.45M263.30 469.90H265.45M263.94 471.05H264.81M266.54 466.40V471.44M267.78 466.40V472.00M266.05 467.69H268.20M266.69 469.27H267.56M266.69 471.30H268.20M268.97 466.40V472.00M269.95 466.40V472.00M270.46 468.08V471.44M268.80 467.28H270.31M269.44 468.09H270.95M268.80 469.57H270.31M268.80 471.06H270.95" fill="none" stroke="#00ee00" stroke-width="0.90"/>
<text x="271.20" y="472.20" font-family="Liberation Sans" font-size="8.8" font-weight="normal" fill="#00ee00" text-anchor="start" textLength="27.50" lengthAdjust="spacingAndGlyphs"  stroke="#00ee00" stroke-width="0.22">,h=Bi/2(</text>
<path d="M300.07 466.60V472.00M301.10 468.22V471.46M299.97 467.88H300.93M299.25 468.88H301.65M299.25 471.49H300.93" fill="none" stroke="#00ee00" stroke-width="0.85"/>
<text x="302.20" y="472.20" font-family="Liberation Sans" font-size="8.8" font-weight="normal" fill="#00ee00" text-anchor="start" textLength="2.40" lengthAdjust="spacingAndGlyphs"  stroke="#00ee00" stroke-width="0.22">)</text>
<text x="238.20" y="481.20" font-family="Liberation Sans" font-size="8.6" font-weight="normal" fill="#00ee00" text-anchor="start" textLength="3.60" lengthAdjust="spacingAndGlyphs"  stroke="#00ee00" stroke-width="0.22">x</text>
<line x1="244.50" y1="478.60" x2="254.00" y2="478.60" stroke="#00ee00" stroke-width="1.0" />
<path d="M254.84 476.64V481.40M255.81 475.80V481.40M256.54 475.80V481.40M254.55 476.86H256.82M254.55 478.01H256.82M254.55 479.24H256.82M254.55 480.47H256.82M257.98 477.48V479.72M259.18 475.80V479.72M258.11 476.70H259.70M257.43 478.48H259.70M257.43 480.23H259.70M260.65 477.48V481.40M262.28 475.80V480.84M260.98 477.21H262.57M260.98 479.11H261.89M260.30 480.55H262.57M263.97 475.80V480.84M264.82 475.80V480.84M263.18 476.74H265.45M263.18 478.42H264.77M263.18 480.09H265.45M266.32 477.48V480.84M267.77 475.80V481.40M266.73 476.74H268.32M266.05 480.50H268.32M269.81 477.48V481.40M270.33 477.48V479.72M269.61 476.78H270.52M268.93 477.58H271.20M268.93 478.94H270.52M269.61 481.10H270.52M272.10 476.64V480.84M273.15 476.64V479.72M273.49 477.48V481.40M271.80 477.06H273.39M271.80 478.35H274.07M271.80 480.78H274.07M275.54 475.80V480.84M276.42 475.80V479.72M275.36 476.99H276.27M274.68 479.47H276.95M278.44 475.80V480.84M279.47 477.48V480.84M277.55 476.29H279.82M277.55 478.46H279.82M277.55 480.09H279.82M280.82 475.80V481.40M281.58 475.80V481.40M282.34 475.80V481.40M281.11 477.68H282.02M281.11 479.57H282.70M283.60 475.80V480.84M284.36 475.80V480.84M285.24 476.64V481.40M283.30 477.27H285.57M283.30 478.16H285.57M283.98 480.70H285.57M286.46 475.80V481.40M287.75 475.80V480.84M286.86 476.75H288.45M286.18 479.07H287.77M286.18 480.17H287.77" fill="none" stroke="#00ee00" stroke-width="0.90"/>
<text x="289.00" y="481.60" font-family="Liberation Sans" font-size="8.8" font-weight="normal" fill="#00ee00" text-anchor="start" textLength="2.00" lengthAdjust="spacingAndGlyphs"  stroke="#00ee00" stroke-width="0.22">(</text>
<path d="M291.83 476.00V481.40M293.65 477.62V480.86M291.45 476.82H293.85M292.17 480.61H293.85" fill="none" stroke="#00ee00" stroke-width="0.85"/>
<text x="294.40" y="481.60" font-family="Liberation Sans" font-size="8.8" font-weight="normal" fill="#00ee00" text-anchor="start" textLength="2.40" lengthAdjust="spacingAndGlyphs"  stroke="#00ee00" stroke-width="0.22">)</text>
<path d="M203.21 499.80V507.36M204.84 502.32V508.20M205.74 502.32V508.20M202.75 501.48H205.23M202.75 503.22H205.23M202.75 506.90H205.23M207.68 502.32V505.68M209.23 499.80V508.20M206.89 502.23H210.44M207.96 505.21H209.38M211.84 502.32V505.68M214.06 502.32V508.20M212.10 500.54H213.52M212.10 502.88H214.58M211.04 505.42H214.58M211.04 506.54H214.58M215.71 502.32V507.36M216.95 499.80V508.20M217.84 499.80V507.36M216.25 501.53H218.73M215.18 504.06H218.73M215.18 507.41H218.73M219.97 501.06V508.20M222.13 499.80V508.20M219.33 501.44H221.81M219.33 502.99H222.87M220.39 504.65H221.81M219.33 506.81H222.87M224.35 501.06V505.68M225.97 499.80V508.20M223.47 501.21H225.95M223.47 506.62H227.02M228.26 499.80V505.68M228.99 502.32V507.36M230.27 499.80V508.20M227.62 500.92H230.10M228.68 506.14H230.10M232.01 499.80V505.68M233.61 501.06V508.20M234.98 499.80V508.20M232.82 501.15H235.31M231.76 506.95H235.31M236.19 502.32V508.20M238.60 502.32V508.20M235.91 500.83H238.39M235.91 503.66H239.45M235.91 506.92H239.45" fill="none" stroke="#f6f6f6" stroke-width="1.15"/>
<rect x="201.00" y="511.00" width="74.30" height="3.20" fill="#00e400" />
<rect x="201.00" y="514.20" width="74.30" height="2.80" fill="#12a012" />
<polyline points="574.00,217.20 574.00,154.60 597.40,154.60 600.80,158.60 600.80,217.20 574.00,217.20" fill="none" stroke="#a6a8ab" stroke-width="1.4" />
<polyline points="574.00,217.20 574.00,220.40 600.80,220.40 600.80,217.20" fill="none" stroke="#a6a8ab" stroke-width="1.2" />
<line x1="574.00" y1="136.80" x2="574.00" y2="154.60" stroke="#a6a8ab" stroke-width="1.1" />
<line x1="600.80" y1="136.80" x2="600.80" y2="158.60" stroke="#a6a8ab" stroke-width="1.1" />
<line x1="597.40" y1="145.00" x2="597.40" y2="154.60" stroke="#a6a8ab" stroke-width="1.0" />
<line x1="572.50" y1="138.40" x2="602.50" y2="138.40" stroke="#a6a8ab" stroke-width="1.1" />
<line x1="572.50" y1="146.40" x2="602.50" y2="146.40" stroke="#a6a8ab" stroke-width="1.1" />
<line x1="572.40" y1="140.00" x2="575.60" y2="136.80" stroke="#a6a8ab" stroke-width="1.1" />
<line x1="599.20" y1="140.00" x2="602.40" y2="136.80" stroke="#a6a8ab" stroke-width="1.1" />
<line x1="572.60" y1="147.80" x2="575.40" y2="145.00" stroke="#a6a8ab" stroke-width="1.1" />
<line x1="596.00" y1="147.80" x2="598.80" y2="145.00" stroke="#a6a8ab" stroke-width="1.1" />
<line x1="599.40" y1="147.80" x2="602.20" y2="145.00" stroke="#a6a8ab" stroke-width="1.1" />
<text x="582.30" y="137.00" font-family="Liberation Sans" font-size="7.4" font-weight="normal" fill="#a6a8ab" text-anchor="start" textLength="10.80" lengthAdjust="spacingAndGlyphs"  stroke="#a6a8ab" stroke-width="0.15">150</text>
<text x="580.00" y="145.20" font-family="Liberation Sans" font-size="7.4" font-weight="normal" fill="#a6a8ab" text-anchor="start" textLength="11.50" lengthAdjust="spacingAndGlyphs"  stroke="#a6a8ab" stroke-width="0.15">130</text>
<text x="596.20" y="145.20" font-family="Liberation Sans" font-size="7.4" font-weight="normal" fill="#a6a8ab" text-anchor="start" textLength="6.40" lengthAdjust="spacingAndGlyphs"  stroke="#a6a8ab" stroke-width="0.15">20</text>
<line x1="600.80" y1="155.00" x2="620.50" y2="155.00" stroke="#a6a8ab" stroke-width="1.0" />
<line x1="600.80" y1="159.00" x2="612.00" y2="159.00" stroke="#a6a8ab" stroke-width="1.0" />
<line x1="610.00" y1="157.50" x2="610.00" y2="191.50" stroke="#a6a8ab" stroke-width="1.1" />
<line x1="618.40" y1="153.50" x2="618.40" y2="218.50" stroke="#a6a8ab" stroke-width="1.1" />
<line x1="608.60" y1="160.40" x2="611.40" y2="157.60" stroke="#a6a8ab" stroke-width="1.1" />
<line x1="608.60" y1="192.00" x2="611.40" y2="189.20" stroke="#a6a8ab" stroke-width="1.1" />
<line x1="617.00" y1="156.40" x2="619.80" y2="153.60" stroke="#a6a8ab" stroke-width="1.1" />
<line x1="617.00" y1="218.60" x2="619.80" y2="215.80" stroke="#a6a8ab" stroke-width="1.1" />
<line x1="600.80" y1="217.20" x2="620.50" y2="217.20" stroke="#a6a8ab" stroke-width="1.0" />
<text x="0" y="0" font-family="Liberation Sans" font-size="6.2" fill="#bcbec0" stroke="#bcbec0" stroke-width="0.15" text-anchor="middle" textLength="5.50" lengthAdjust="spacingAndGlyphs" transform="translate(609.03 157.00) rotate(-90)">20</text>
<text x="0" y="0" font-family="Liberation Sans" font-size="7.4" fill="#bcbec0" stroke="#bcbec0" stroke-width="0.15" text-anchor="middle" textLength="12.00" lengthAdjust="spacingAndGlyphs" transform="translate(609.56 173.00) rotate(-90)">180</text>
<text x="0" y="0" font-family="Liberation Sans" font-size="7.4" fill="#bcbec0" stroke="#bcbec0" stroke-width="0.15" text-anchor="middle" textLength="12.00" lengthAdjust="spacingAndGlyphs" transform="translate(617.86 184.50) rotate(-90)">350</text>
<line x1="600.80" y1="190.60" x2="654.60" y2="190.60" stroke="#a6a8ab" stroke-width="1.4" />
<line x1="600.80" y1="198.30" x2="654.60" y2="198.30" stroke="#a6a8ab" stroke-width="1.3" />
<line x1="600.80" y1="210.00" x2="654.60" y2="210.00" stroke="#a6a8ab" stroke-width="1.3" />
<line x1="600.80" y1="211.30" x2="643.00" y2="211.30" stroke="#a6a8ab" stroke-width="1.0" />
<line x1="654.60" y1="190.60" x2="654.60" y2="282.30" stroke="#a6a8ab" stroke-width="1.4" />
<text x="627.00" y="196.60" font-family="Liberation Sans" font-size="6.2" font-weight="normal" fill="#a6a8ab" text-anchor="start" textLength="10.00" lengthAdjust="spacingAndGlyphs"  stroke="#a6a8ab" stroke-width="0.15">???</text>
<text x="627.00" y="207.20" font-family="Liberation Sans" font-size="6.2" font-weight="normal" fill="#a6a8ab" text-anchor="start" textLength="10.00" lengthAdjust="spacingAndGlyphs"  stroke="#a6a8ab" stroke-width="0.15">???</text>
<text x="620.00" y="220.20" font-family="Liberation Sans" font-size="6.4" font-weight="normal" fill="#a6a8ab" text-anchor="start" textLength="10.50" lengthAdjust="spacingAndGlyphs"  stroke="#a6a8ab" stroke-width="0.15">???</text>
<polyline points="619.80,222.20 638.60,222.20 641.60,211.00" fill="none" stroke="#a6a8ab" stroke-width="1.1" />
<polyline points="574.00,211.00 556.20,211.00 521.00,246.60 654.60,246.60" fill="none" stroke="#a6a8ab" stroke-width="1.4" />
<polyline points="521.00,246.60 503.00,246.60 467.50,282.20 654.60,282.20" fill="none" stroke="#a6a8ab" stroke-width="1.4" />
<line x1="556.20" y1="196.40" x2="556.20" y2="211.00" stroke="#a6a8ab" stroke-width="1.1" />
<line x1="574.00" y1="196.40" x2="574.00" y2="211.00" stroke="#a6a8ab" stroke-width="1.1" />
<line x1="554.70" y1="197.60" x2="575.50" y2="197.60" stroke="#a6a8ab" stroke-width="1.1" />
<line x1="554.80" y1="199.00" x2="557.60" y2="196.20" stroke="#a6a8ab" stroke-width="1.1" />
<line x1="572.60" y1="199.00" x2="575.40" y2="196.20" stroke="#a6a8ab" stroke-width="1.1" />
<text x="565.10" y="196.30" font-family="Liberation Sans" font-size="7.2" font-weight="normal" fill="#a6a8ab" text-anchor="middle" textLength="10.50" lengthAdjust="spacingAndGlyphs"  stroke="#a6a8ab" stroke-width="0.15">100</text>
<line x1="502.60" y1="232.00" x2="502.60" y2="246.60" stroke="#a6a8ab" stroke-width="1.1" />
<line x1="521.00" y1="232.00" x2="521.00" y2="246.60" stroke="#a6a8ab" stroke-width="1.1" />
<line x1="501.10" y1="233.20" x2="522.50" y2="233.20" stroke="#a6a8ab" stroke-width="1.1" />
<line x1="501.20" y1="234.60" x2="504.00" y2="231.80" stroke="#a6a8ab" stroke-width="1.1" />
<line x1="519.60" y1="234.60" x2="522.40" y2="231.80" stroke="#a6a8ab" stroke-width="1.1" />
<text x="511.80" y="231.90" font-family="Liberation Sans" font-size="7.2" font-weight="normal" fill="#a6a8ab" text-anchor="middle" textLength="10.50" lengthAdjust="spacingAndGlyphs"  stroke="#a6a8ab" stroke-width="0.15">100</text>
<text x="481.00" y="266.80" font-family="Liberation Sans" font-size="6.4" font-weight="normal" fill="#a6a8ab" text-anchor="start" textLength="8.00" lengthAdjust="spacingAndGlyphs" transform="rotate(-45 481.00 266.80)"  stroke="#a6a8ab" stroke-width="0.15">1:1</text>
<text x="538.50" y="223.50" font-family="Liberation Sans" font-size="6.4" font-weight="normal" fill="#a6a8ab" text-anchor="start" textLength="8.00" lengthAdjust="spacingAndGlyphs" transform="rotate(-45 538.50 223.50)"  stroke="#a6a8ab" stroke-width="0.15">1:1</text>
<polyline points="544.00,228.20 578.00,228.20 586.20,220.40" fill="none" stroke="#a6a8ab" stroke-width="1.1" />
<text x="544.00" y="227.00" font-family="Liberation Sans" font-size="6.6" font-weight="normal" fill="#a6a8ab" text-anchor="start" textLength="27.00" lengthAdjust="spacingAndGlyphs"  stroke="#a6a8ab" stroke-width="0.15">15???2cm</text>
<text x="568.30" y="236.20" font-family="Liberation Sans" font-size="6.6" font-weight="normal" fill="#a6a8ab" text-anchor="start" textLength="11.00" lengthAdjust="spacingAndGlyphs"  stroke="#a6a8ab" stroke-width="0.15">5.5%</text>
<path d="M580.36 232.48V236.40M580.74 230.80V235.84M581.97 232.48V236.40M580.54 231.63H582.14M580.54 235.81H581.45M583.37 230.80V235.84M584.83 230.80V234.72M582.74 231.38H584.34M583.43 234.25H585.03M586.09 232.48V235.84M587.44 230.80V234.72M585.63 231.24H587.92M585.63 233.43H587.92M585.63 235.02H587.92M589.38 232.48V234.72M590.55 232.48V236.40M589.20 231.24H590.12M588.52 232.53H590.12M588.52 234.04H590.12M589.20 235.73H590.81M592.11 230.80V236.40M593.27 231.64V236.40M592.09 232.81H593.69M591.41 235.29H593.01M594.86 231.64V236.40M595.87 232.48V234.72M594.29 231.74H595.90M594.29 234.61H595.90M597.51 230.80V236.40M598.82 232.48V234.72M597.18 231.68H598.79M597.87 233.42H599.47M597.18 234.93H598.79M600.41 230.80V236.40M601.23 231.64V236.40M601.82 230.80V236.40M600.07 231.55H602.36M600.07 233.37H601.67M600.07 234.96H602.36M603.82 231.64V236.40M604.71 231.64V236.40M603.65 231.62H605.25M602.96 232.67H604.56M602.96 234.58H605.25M603.65 235.63H605.25" fill="none" stroke="#a6a8ab" stroke-width="0.75"/>
<text x="605.80" y="236.20" font-family="Liberation Sans" font-size="6.6" font-weight="normal" fill="#a6a8ab" text-anchor="start" textLength="15.50" lengthAdjust="spacingAndGlyphs"  stroke="#a6a8ab" stroke-width="0.15">20cm</text>
<text x="536.40" y="271.00" font-family="Liberation Sans" font-size="6.6" font-weight="normal" fill="#a6a8ab" text-anchor="start" textLength="6.50" lengthAdjust="spacingAndGlyphs"  stroke="#a6a8ab" stroke-width="0.15">4%</text>
<path d="M543.91 266.44V269.52M544.97 265.60V270.64M544.17 266.52H545.85M543.45 268.05H545.85M543.45 270.49H545.13M546.57 265.60V269.52M547.64 265.60V271.20M548.51 267.28V271.20M546.45 267.45H548.13M546.45 270.16H548.13M549.98 267.28V269.52M550.61 265.60V271.20M551.30 266.44V269.52M549.45 266.75H551.13M550.17 268.35H551.13M550.17 270.12H551.85M553.29 265.60V269.52M554.60 265.60V269.52M552.45 266.74H554.85M552.45 268.05H554.85M552.45 270.67H554.85M555.88 266.44V270.64M556.91 267.28V271.20M556.17 266.00H557.85M556.17 268.10H557.85M555.45 270.40H557.13M558.73 265.60V269.52M559.78 266.44V269.52M560.56 267.28V271.20M558.45 266.04H560.85M559.17 267.57H560.13M558.45 268.91H560.85M558.45 270.11H560.13M562.19 265.60V271.20M563.35 265.60V271.20M562.17 266.07H563.85M561.45 267.46H563.85M561.45 268.94H563.85M561.45 270.44H563.85M564.76 265.60V269.52M565.56 265.60V271.20M566.47 265.60V271.20M565.17 266.35H566.13M565.17 267.55H566.85M564.45 269.10H566.13M565.17 270.27H566.85M568.19 267.28V270.64M569.36 265.60V271.20M568.17 266.04H569.85M568.17 268.70H569.85M567.45 270.68H569.13" fill="none" stroke="#a6a8ab" stroke-width="0.75"/>
<text x="570.50" y="271.00" font-family="Liberation Sans" font-size="6.6" font-weight="normal" fill="#a6a8ab" text-anchor="start" textLength="15.50" lengthAdjust="spacingAndGlyphs"  stroke="#a6a8ab" stroke-width="0.15">20cm</text>
<text x="523.00" y="168.80" font-family="Liberation Sans" font-size="6.2" font-weight="normal" fill="#a6a8ab" text-anchor="start" textLength="10.00" lengthAdjust="spacingAndGlyphs"  stroke="#a6a8ab" stroke-width="0.15">???</text>
<polyline points="522.00,171.60 557.00,171.60 577.60,184.60" fill="none" stroke="#a6a8ab" stroke-width="1.1" />
<line x1="659.60" y1="190.60" x2="662.00" y2="190.60" stroke="#a6a8ab" stroke-width="1.1" />
<line x1="666.50" y1="190.60" x2="674.20" y2="190.60" stroke="#a6a8ab" stroke-width="1.1" />
<line x1="671.10" y1="192.20" x2="674.30" y2="189.00" stroke="#a6a8ab" stroke-width="1.1" />
<line x1="659.60" y1="211.00" x2="662.00" y2="211.00" stroke="#a6a8ab" stroke-width="1.1" />
<line x1="666.50" y1="211.00" x2="674.20" y2="211.00" stroke="#a6a8ab" stroke-width="1.1" />
<line x1="671.10" y1="212.60" x2="674.30" y2="209.40" stroke="#a6a8ab" stroke-width="1.1" />
<line x1="659.60" y1="246.60" x2="662.00" y2="246.60" stroke="#a6a8ab" stroke-width="1.1" />
<line x1="666.50" y1="246.60" x2="674.20" y2="246.60" stroke="#a6a8ab" stroke-width="1.1" />
<line x1="671.10" y1="248.20" x2="674.30" y2="245.00" stroke="#a6a8ab" stroke-width="1.1" />
<line x1="659.60" y1="282.30" x2="662.00" y2="282.30" stroke="#a6a8ab" stroke-width="1.1" />
<line x1="666.50" y1="282.30" x2="674.20" y2="282.30" stroke="#a6a8ab" stroke-width="1.1" />
<line x1="671.10" y1="283.90" x2="674.30" y2="280.70" stroke="#a6a8ab" stroke-width="1.1" />
<line x1="672.70" y1="190.60" x2="672.70" y2="282.30" stroke="#a6a8ab" stroke-width="1.2" />
<line x1="673.00" y1="190.60" x2="688.30" y2="190.60" stroke="#a6a8ab" stroke-width="1.1" />
<line x1="683.20" y1="192.20" x2="686.40" y2="189.00" stroke="#a6a8ab" stroke-width="1.1" />
<line x1="673.00" y1="282.30" x2="688.30" y2="282.30" stroke="#a6a8ab" stroke-width="1.1" />
<line x1="683.20" y1="283.90" x2="686.40" y2="280.70" stroke="#a6a8ab" stroke-width="1.1" />
<line x1="684.80" y1="190.60" x2="684.80" y2="282.30" stroke="#a6a8ab" stroke-width="1.2" />
<text x="0" y="0" font-family="Liberation Sans" font-size="7.6" fill="#bcbec0" stroke="#bcbec0" stroke-width="0.15" text-anchor="middle" textLength="10.50" lengthAdjust="spacingAndGlyphs" transform="translate(672.04 200.60) rotate(-90)">116</text>
<text x="0" y="0" font-family="Liberation Sans" font-size="7.6" fill="#bcbec0" stroke="#bcbec0" stroke-width="0.15" text-anchor="middle" textLength="12.00" lengthAdjust="spacingAndGlyphs" transform="translate(672.04 228.60) rotate(-90)">200</text>
<text x="0" y="0" font-family="Liberation Sans" font-size="7.6" fill="#bcbec0" stroke="#bcbec0" stroke-width="0.15" text-anchor="middle" textLength="12.00" lengthAdjust="spacingAndGlyphs" transform="translate(672.04 264.40) rotate(-90)">200</text>
<text x="0" y="0" font-family="Liberation Sans" font-size="7.6" fill="#bcbec0" stroke="#bcbec0" stroke-width="0.15" text-anchor="middle" textLength="11.00" lengthAdjust="spacingAndGlyphs" transform="translate(684.24 236.30) rotate(-90)">516</text>
<polyline points="420.00,475.80 420.00,412.60 443.00,412.60 447.20,416.40 447.20,475.80 420.00,475.80" fill="none" stroke="#a6a8ab" stroke-width="1.5" />
<line x1="420.00" y1="391.60" x2="420.00" y2="412.60" stroke="#a6a8ab" stroke-width="1.1" />
<line x1="447.30" y1="391.60" x2="447.30" y2="416.00" stroke="#a6a8ab" stroke-width="1.1" />
<line x1="443.00" y1="402.00" x2="443.00" y2="412.60" stroke="#a6a8ab" stroke-width="1.0" />
<line x1="418.50" y1="393.20" x2="449.00" y2="393.20" stroke="#a6a8ab" stroke-width="1.1" />
<line x1="418.50" y1="403.20" x2="449.00" y2="403.20" stroke="#a6a8ab" stroke-width="1.1" />
<line x1="418.40" y1="394.80" x2="421.60" y2="391.60" stroke="#a6a8ab" stroke-width="1.1" />
<line x1="445.70" y1="394.80" x2="448.90" y2="391.60" stroke="#a6a8ab" stroke-width="1.1" />
<line x1="418.60" y1="404.60" x2="421.40" y2="401.80" stroke="#a6a8ab" stroke-width="1.1" />
<line x1="441.60" y1="404.60" x2="444.40" y2="401.80" stroke="#a6a8ab" stroke-width="1.1" />
<line x1="445.90" y1="404.60" x2="448.70" y2="401.80" stroke="#a6a8ab" stroke-width="1.1" />
<text x="428.80" y="392.00" font-family="Liberation Sans" font-size="7.4" font-weight="normal" fill="#a6a8ab" text-anchor="start" textLength="10.40" lengthAdjust="spacingAndGlyphs"  stroke="#a6a8ab" stroke-width="0.15">150</text>
<text x="426.60" y="402.00" font-family="Liberation Sans" font-size="7.4" font-weight="normal" fill="#a6a8ab" text-anchor="start" textLength="10.80" lengthAdjust="spacingAndGlyphs"  stroke="#a6a8ab" stroke-width="0.15">130</text>
<text x="443.00" y="402.00" font-family="Liberation Sans" font-size="7.4" font-weight="normal" fill="#a6a8ab" text-anchor="start" textLength="6.00" lengthAdjust="spacingAndGlyphs"  stroke="#a6a8ab" stroke-width="0.15">20</text>
<line x1="443.00" y1="412.60" x2="472.00" y2="412.60" stroke="#a6a8ab" stroke-width="1.0" />
<line x1="447.20" y1="416.40" x2="461.50" y2="416.40" stroke="#a6a8ab" stroke-width="1.0" />
<line x1="447.20" y1="475.80" x2="472.00" y2="475.80" stroke="#a6a8ab" stroke-width="1.0" />
<line x1="459.60" y1="415.00" x2="459.60" y2="477.00" stroke="#a6a8ab" stroke-width="1.1" />
<line x1="470.10" y1="411.00" x2="470.10" y2="477.00" stroke="#a6a8ab" stroke-width="1.1" />
<line x1="458.20" y1="417.80" x2="461.00" y2="415.00" stroke="#a6a8ab" stroke-width="1.1" />
<line x1="458.20" y1="477.20" x2="461.00" y2="474.40" stroke="#a6a8ab" stroke-width="1.1" />
<line x1="468.70" y1="414.00" x2="471.50" y2="411.20" stroke="#a6a8ab" stroke-width="1.1" />
<line x1="468.70" y1="477.20" x2="471.50" y2="474.40" stroke="#a6a8ab" stroke-width="1.1" />
<text x="0" y="0" font-family="Liberation Sans" font-size="6.2" fill="#bcbec0" stroke="#bcbec0" stroke-width="0.15" text-anchor="middle" textLength="5.50" lengthAdjust="spacingAndGlyphs" transform="translate(458.73 413.60) rotate(-90)">20</text>
<text x="0" y="0" font-family="Liberation Sans" font-size="7.6" fill="#bcbec0" stroke="#bcbec0" stroke-width="0.15" text-anchor="middle" textLength="12.00" lengthAdjust="spacingAndGlyphs" transform="translate(459.24 445.30) rotate(-90)">330</text>
<text x="0" y="0" font-family="Liberation Sans" font-size="7.6" fill="#bcbec0" stroke="#bcbec0" stroke-width="0.15" text-anchor="middle" textLength="12.00" lengthAdjust="spacingAndGlyphs" transform="translate(469.74 443.30) rotate(-90)">350</text>
<rect x="507.6" y="412.6" width="27" height="63.2" fill="none" stroke="#a6a8ab" stroke-width="1.5"/>
<line x1="507.60" y1="401.60" x2="507.60" y2="412.60" stroke="#a6a8ab" stroke-width="1.1" />
<line x1="534.60" y1="401.60" x2="534.60" y2="412.60" stroke="#a6a8ab" stroke-width="1.1" />
<line x1="506.00" y1="403.20" x2="536.20" y2="403.20" stroke="#a6a8ab" stroke-width="1.1" />
<line x1="506.00" y1="404.80" x2="509.20" y2="401.60" stroke="#a6a8ab" stroke-width="1.1" />
<line x1="533.00" y1="404.80" x2="536.20" y2="401.60" stroke="#a6a8ab" stroke-width="1.1" />
<text x="515.80" y="402.00" font-family="Liberation Sans" font-size="7.4" font-weight="normal" fill="#a6a8ab" text-anchor="start" textLength="11.00" lengthAdjust="spacingAndGlyphs"  stroke="#a6a8ab" stroke-width="0.15">150</text>
<line x1="534.60" y1="412.60" x2="549.50" y2="412.60" stroke="#a6a8ab" stroke-width="1.0" />
<line x1="534.60" y1="475.80" x2="549.50" y2="475.80" stroke="#a6a8ab" stroke-width="1.0" />
<line x1="547.20" y1="411.00" x2="547.20" y2="477.00" stroke="#a6a8ab" stroke-width="1.1" />
<line x1="545.80" y1="414.00" x2="548.60" y2="411.20" stroke="#a6a8ab" stroke-width="1.1" />
<line x1="545.80" y1="477.20" x2="548.60" y2="474.40" stroke="#a6a8ab" stroke-width="1.1" />
<text x="0" y="0" font-family="Liberation Sans" font-size="7.6" fill="#bcbec0" stroke="#bcbec0" stroke-width="0.15" text-anchor="middle" textLength="12.00" lengthAdjust="spacingAndGlyphs" transform="translate(546.84 443.30) rotate(-90)">350</text>
<text x="407.00" y="500.90" font-family="Liberation Sans" font-size="11" font-weight="normal" fill="#ececec" text-anchor="start" textLength="30.00" lengthAdjust="spacingAndGlyphs" >??????</text>
<rect x="406.00" y="504.00" width="52.80" height="1.50" fill="#f0f0f0" />
<rect x="406.00" y="506.90" width="52.80" height="1.50" fill="#f0f0f0" />
<text x="490.00" y="500.90" font-family="Liberation Sans" font-size="11" font-weight="normal" fill="#ececec" text-anchor="start" textLength="50.50" lengthAdjust="spacingAndGlyphs" >??????????</text>
<rect x="488.00" y="504.00" width="87.50" height="1.50" fill="#f0f0f0" />
<rect x="488.00" y="506.90" width="87.50" height="1.50" fill="#f0f0f0" />
<path d="M591.16 490.65V496.60M592.88 489.60V496.60M591.24 490.92H593.55M590.25 492.27H593.55M591.24 494.18H593.55M590.25 495.95H593.55M594.98 489.60V494.50M596.09 489.60V494.50M597.17 491.70V496.60M594.15 491.07H597.45M595.14 492.53H597.45M594.15 494.99H597.45" fill="none" stroke="#f0f0f0" stroke-width="1.15"/>
<text x="590.00" y="507.80" font-family="Liberation Sans" font-size="9.6" font-weight="normal" fill="#f0f0f0" text-anchor="start" textLength="6.50" lengthAdjust="spacingAndGlyphs" stroke="#f4f4f4" stroke-width="0.35">1.</text>
<path d="M599.03 501.20V507.32M600.11 501.20V508.00M598.25 502.63H600.28M598.25 506.13H600.28M602.52 503.24V508.00M604.20 503.24V507.32M601.75 501.68H604.65M601.75 504.97H603.78M601.75 507.15H603.78M605.68 501.20V507.32M607.27 502.22V505.96M605.25 502.69H608.15M605.25 506.57H608.15M609.77 502.22V508.00M610.91 503.24V507.32M609.62 502.91H611.65M609.62 506.31H610.78M612.69 502.22V508.00M613.75 501.20V508.00M614.57 503.24V508.00M613.12 502.39H615.15M613.12 504.45H614.28M613.12 507.38H614.28" fill="none" stroke="#f0f0f0" stroke-width="1.05"/>
<circle cx="616.6" cy="507" r="1" fill="none" stroke="#f0f0f0" stroke-width="0.8"/>
<circle cx="645.8" cy="519.8" r="1" fill="none" stroke="#f0f0f0" stroke-width="0.8"/>
<text x="590.00" y="520.60" font-family="Liberation Sans" font-size="9.6" font-weight="normal" fill="#f0f0f0" text-anchor="start" textLength="7.00" lengthAdjust="spacingAndGlyphs" stroke="#f4f4f4" stroke-width="0.35">2.</text>
<path d="M599.01 515.02V520.12M601.03 514.00V520.80M598.65 514.95H601.59M599.53 516.73H601.59M599.53 519.92H601.59M602.79 514.00V518.76M604.71 514.00V520.80M602.19 515.52H605.13M603.07 516.89H604.25M602.19 520.04H604.25M606.14 514.00V520.80M607.42 514.00V520.12M608.20 514.00V518.76M605.73 515.86H607.78M605.73 518.92H608.67M609.73 515.02V518.76M610.54 516.04V518.76M611.63 514.00V520.12M610.15 515.28H612.20M609.27 517.51H612.20M609.27 519.15H612.20M614.03 514.00V520.80M615.50 514.00V518.76M613.69 515.11H615.74M612.80 516.41H614.86M613.69 518.12H615.74M612.80 519.94H615.74M616.82 514.00V520.12M617.94 516.04V518.76M618.98 516.04V518.76M617.22 515.75H618.40M616.34 518.57H619.28M620.52 514.00V518.76M621.08 516.04V520.80M622.30 514.00V520.80M619.88 515.04H622.82M619.88 516.79H621.94M620.76 520.11H622.82M623.66 514.00V520.80M625.03 514.00V518.76M625.97 515.02V518.76M624.30 516.45H626.36M624.30 519.45H626.36M627.79 515.02V520.12M628.74 516.04V520.80M626.96 515.56H629.90M627.84 517.29H629.90M626.96 519.65H629.01M631.63 514.00V518.76M632.30 514.00V520.80M630.50 515.03H633.43M630.50 516.59H633.43M631.38 518.71H632.55M630.50 520.13H633.43M634.62 516.04V520.80M636.65 516.04V520.12M634.03 515.67H636.97M634.03 517.90H636.09M634.03 519.26H636.97M637.97 514.00V518.76M639.34 516.04V520.80M638.45 515.60H640.51M637.57 517.59H639.63M637.57 519.15H640.51M641.93 516.04V520.12M642.90 514.00V520.80M641.11 515.59H644.05M641.99 517.20H643.17M641.11 519.37H644.05" fill="none" stroke="#f0f0f0" stroke-width="1.05"/>
<clipPath id="c6"><rect x="527.2" y="335.6" width="44.59999999999991" height="23.899999999999977"/></clipPath>
<g clip-path="url(#c6)" stroke="#00f000" stroke-width="1.15"><line x1="499.20" y1="361.50" x2="527.10" y2="333.60"/><line x1="506.70" y1="361.50" x2="534.60" y2="333.60"/><line x1="514.20" y1="361.50" x2="542.10" y2="333.60"/><line x1="521.70" y1="361.50" x2="549.60" y2="333.60"/><line x1="529.20" y1="361.50" x2="557.10" y2="333.60"/><line x1="536.70" y1="361.50" x2="564.60" y2="333.60"/><line x1="544.20" y1="361.50" x2="572.10" y2="333.60"/><line x1="551.70" y1="361.50" x2="579.60" y2="333.60"/><line x1="559.20" y1="361.50" x2="587.10" y2="333.60"/><line x1="566.70" y1="361.50" x2="594.60" y2="333.60"/></g>
<clipPath id="c7"><rect x="527.2" y="335.6" width="44.59999999999991" height="23.899999999999977"/></clipPath>
<g clip-path="url(#c7)" stroke="#00f000" stroke-width="1.05" stroke-dasharray="3.2 2.6"><line x1="502.95" y1="361.50" x2="530.85" y2="333.60"/><line x1="510.45" y1="361.50" x2="538.35" y2="333.60"/><line x1="517.95" y1="361.50" x2="545.85" y2="333.60"/><line x1="525.45" y1="361.50" x2="553.35" y2="333.60"/><line x1="532.95" y1="361.50" x2="560.85" y2="333.60"/><line x1="540.45" y1="361.50" x2="568.35" y2="333.60"/><line x1="547.95" y1="361.50" x2="575.85" y2="333.60"/><line x1="555.45" y1="361.50" x2="583.35" y2="333.60"/><line x1="562.95" y1="361.50" x2="590.85" y2="333.60"/><line x1="570.45" y1="361.50" x2="598.35" y2="333.60"/></g>
<rect x="527.2" y="335.6" width="44.59999999999991" height="23.899999999999977" fill="none" stroke="#00f000" stroke-width="1.4"/>
<clipPath id="c8"><rect x="589.4" y="335.8" width="44.10000000000002" height="24.0"/></clipPath>
<g clip-path="url(#c8)" stroke="#00f000" stroke-width="1.15"><line x1="564.90" y1="361.80" x2="592.90" y2="333.80"/><line x1="578.40" y1="361.80" x2="606.40" y2="333.80"/><line x1="591.90" y1="361.80" x2="619.90" y2="333.80"/><line x1="605.40" y1="361.80" x2="633.40" y2="333.80"/><line x1="618.90" y1="361.80" x2="646.90" y2="333.80"/><line x1="632.40" y1="361.80" x2="660.40" y2="333.80"/></g>
<clipPath id="c9"><rect x="589.4" y="335.8" width="44.10000000000002" height="24.0"/></clipPath>
<g clip-path="url(#c9)" stroke="#00f000" stroke-width="1.05" stroke-dasharray="4.5 5"><line x1="571.60" y1="361.80" x2="599.60" y2="333.80"/><line x1="585.10" y1="361.80" x2="613.10" y2="333.80"/><line x1="598.60" y1="361.80" x2="626.60" y2="333.80"/><line x1="612.10" y1="361.80" x2="640.10" y2="333.80"/><line x1="625.60" y1="361.80" x2="653.60" y2="333.80"/></g>
<rect x="589.4" y="335.8" width="44.10000000000002" height="24.0" fill="none" stroke="#00f000" stroke-width="1.4"/>
<rect x="657.00" y="335.40" width="44.80" height="24.80" fill="#00f400" rx="0.8"/>
<path fill="#00f000" d="M621 387h1v1h-1zM603 388h1v1h-1zM591 384h1v1h-1zM628 390h1v1h-1zM593 395h1v1h-1zM618 390h2v1h-2zM596 395h1v1h-1zM599 392h1v1h-1zM612 383h2v1h-2zM629 398h1v2h-1zM623 382h2v1h-2zM620 387h1v2h-1zM630 383h1v1h-1zM596 379h1v1h-1zM625 397h1v1h-1zM615 397h1v1h-1zM607 398h1v1h-1zM614 393h2v1h-2zM608 390h1v1h-1zM615 395h1v1h-1zM614 399h1v1h-1zM621 391h1v1h-1zM601 396h1v1h-1zM599 392h1v1h-1zM627 386h1v1h-1zM611 389h2v2h-2zM628 386h2v2h-2zM603 392h1v2h-1zM590 379h1v1h-1zM626 394h1v1h-1zM624 388h1v1h-1zM617 395h1v2h-1zM617 391h1v1h-1zM592 398h2v1h-2zM618 379h2v1h-2zM623 386h1v1h-1zM613 395h1v1h-1zM625 397h1v1h-1zM602 392h1v1h-1zM618 398h1v2h-1zM627 389h2v1h-2zM595 384h1v1h-1zM613 381h1v2h-1zM622 384h1v1h-1zM608 389h1v2h-1zM622 392h1v1h-1zM623 388h1v2h-1zM603 395h1v2h-1zM616 384h1v1h-1zM626 398h1v1h-1z"/>
<rect x="599.40" y="378.30" width="3.50" height="24.20" fill="#212830" />
<line x1="599.40" y1="378.30" x2="599.40" y2="402.50" stroke="#00f000" stroke-width="1.2" />
<line x1="602.90" y1="378.30" x2="602.90" y2="402.50" stroke="#00f000" stroke-width="1.2" />
<rect x="618.40" y="378.30" width="4.30" height="24.20" fill="#212830" />
<line x1="618.40" y1="378.30" x2="618.40" y2="402.50" stroke="#00f000" stroke-width="1.2" />
<line x1="622.70" y1="378.30" x2="622.70" y2="402.50" stroke="#00f000" stroke-width="1.2" />
<rect x="589.4" y="378.3" width="44.10000000000002" height="24.19999999999999" fill="none" stroke="#00f000" stroke-width="1.4"/>
<clipPath id="c10"><rect x="657.2" y="378.3" width="44.39999999999998" height="24.19999999999999"/></clipPath>
<g clip-path="url(#c10)" stroke="#00f000" stroke-width="1.1"><line x1="629.20" y1="404.50" x2="657.40" y2="376.30"/><line x1="636.60" y1="404.50" x2="664.80" y2="376.30"/><line x1="644.00" y1="404.50" x2="672.20" y2="376.30"/><line x1="651.40" y1="404.50" x2="679.60" y2="376.30"/><line x1="658.80" y1="404.50" x2="687.00" y2="376.30"/><line x1="666.20" y1="404.50" x2="694.40" y2="376.30"/><line x1="673.60" y1="404.50" x2="701.80" y2="376.30"/><line x1="681.00" y1="404.50" x2="709.20" y2="376.30"/><line x1="688.40" y1="404.50" x2="716.60" y2="376.30"/><line x1="695.80" y1="404.50" x2="724.00" y2="376.30"/></g>
<path fill="#00f000" d="M694 399h1v1h-1zM660 392h1v1h-1zM658 388h2v1h-2zM693 379h2v2h-2zM683 382h1v1h-1zM659 385h1v1h-1zM693 397h1v1h-1zM699 396h1v1h-1zM667 397h1v1h-1zM696 382h1v1h-1zM691 395h1v1h-1zM664 381h1v1h-1zM691 394h1v2h-1zM697 392h1v2h-1zM661 399h1v1h-1zM695 389h1v1h-1zM673 390h1v1h-1zM660 387h1v1h-1zM695 381h1v1h-1zM686 398h1v1h-1zM661 386h1v2h-1zM695 380h1v1h-1zM697 386h1v1h-1zM660 384h2v2h-2zM669 389h1v1h-1zM687 388h1v1h-1zM674 394h2v2h-2zM662 386h2v1h-2zM695 386h1v1h-1zM683 394h1v1h-1zM673 381h1v1h-1zM680 391h1v1h-1zM676 391h1v1h-1zM665 389h1v1h-1zM682 389h1v1h-1zM662 382h1v1h-1zM680 396h1v1h-1zM670 393h1v1h-1zM673 392h1v1h-1zM659 389h1v2h-1zM673 383h1v1h-1zM675 396h1v2h-1zM666 396h1v1h-1zM673 384h1v1h-1zM671 391h1v1h-1zM695 385h1v1h-1zM688 395h1v1h-1zM686 400h1v1h-1zM674 398h1v2h-1zM695 390h1v1h-1zM683 398h1v1h-1zM666 382h2v1h-2zM663 396h1v2h-1zM682 379h1v1h-1zM694 383h1v1h-1zM682 381h2v1h-2zM672 389h1v1h-1zM664 381h1v1h-1zM681 395h2v1h-2zM670 381h2v1h-2zM663 386h1v1h-1zM683 388h1v1h-1zM687 399h1v2h-1zM666 387h1v1h-1zM681 400h1v2h-1zM680 392h1v1h-1zM687 386h2v2h-2zM683 390h2v2h-2zM664 384h1v1h-1zM675 398h2v1h-2zM660 391h1v1h-1zM668 392h1v1h-1zM677 383h1v1h-1zM660 396h1v1h-1zM698 384h1v1h-1zM672 397h1v1h-1zM691 387h2v2h-2zM694 390h2v2h-2zM665 399h1v1h-1zM660 397h1v1h-1zM661 386h2v1h-2zM660 389h1v1h-1zM680 381h1v1h-1zM683 398h1v2h-1zM675 395h1v1h-1zM685 393h2v2h-2zM690 399h1v1h-1zM690 380h2v1h-2zM671 392h2v1h-2zM666 394h2v1h-2z"/>
<rect x="657.2" y="378.3" width="44.39999999999998" height="24.19999999999999" fill="none" stroke="#00f000" stroke-width="1.4"/>
<path d="M604.62 319.00V324.22M605.87 320.74V324.80M604.53 319.71H605.97M603.45 322.20H605.97M603.45 323.52H605.97" fill="none" stroke="#b8babc" stroke-width="0.84"/>
<path d="M615.86 319.87V324.80M618.28 319.87V323.06M615.25 319.92H618.85M615.25 321.84H618.85M615.25 323.31H618.85" fill="none" stroke="#b8babc" stroke-width="0.84"/>
<rect x="601.00" y="327.40" width="26.00" height="2.40" fill="#00ee00" />
<rect x="601.00" y="330.80" width="26.00" height="1.00" fill="#00d800" />
<path d="M527.93 365.02V368.80M529.40 363.40V368.80M527.25 363.92H529.95M527.25 365.43H529.95M528.06 366.77H529.95M527.25 367.81H529.95M530.76 364.21V367.18M532.33 363.40V368.80M531.36 364.13H533.25M530.55 367.40H533.25M534.53 363.40V368.26M535.68 364.21V368.80M534.66 365.04H536.55M533.85 367.62H535.74M538.16 365.02V368.26M539.16 364.21V368.80M537.15 364.20H539.04M537.96 365.72H539.85M537.15 366.70H539.04M537.15 368.23H539.85M541.35 365.02V368.80M542.15 363.40V368.80M540.45 364.63H542.34M540.45 366.15H543.15M540.45 368.24H543.15" fill="none" stroke="#adafb1" stroke-width="0.75"/>
<text x="543.80" y="368.60" font-family="Liberation Sans" font-size="6.6" font-weight="normal" fill="#adafb1" text-anchor="start" textLength="17.00" lengthAdjust="spacingAndGlyphs" >SMA-13</text>
<path d="M596.11 366.02V368.18M597.19 366.02V369.26M595.25 365.53H597.90M596.04 366.77H597.90M596.04 368.49H597.11M599.27 365.21V369.26M600.28 365.21V369.80M599.29 365.16H601.15M598.50 366.49H601.15M598.50 367.71H601.15M598.50 369.33H601.15M602.18 366.02V368.18M603.42 364.40V368.18M602.54 365.02H604.40M602.54 367.92H604.40M605.71 364.40V369.80M607.12 366.02V369.80M605.00 365.35H607.65M605.00 366.32H607.65M605.00 367.39H607.65M605.79 369.27H607.65" fill="none" stroke="#adafb1" stroke-width="0.75"/>
<text x="608.30" y="369.60" font-family="Liberation Sans" font-size="6.6" font-weight="normal" fill="#adafb1" text-anchor="start" textLength="14.50" lengthAdjust="spacingAndGlyphs" >AC-20</text>
<path d="M673.58 366.00V370.60M674.80 367.38V370.60M673.25 367.27H675.05M673.25 369.14H675.05M676.66 366.00V370.14M677.56 367.38V370.60M678.67 367.38V370.14M676.42 366.91H678.21M676.42 367.68H678.98M677.19 369.19H678.21M676.42 369.87H678.21M680.04 367.38V370.60M681.51 367.38V369.22M680.35 366.50H682.15M679.58 368.00H682.15M679.58 369.50H682.15" fill="none" stroke="#adafb1" stroke-width="0.75"/>
<text x="586.00" y="413.40" font-family="Liberation Sans" font-size="6.6" font-weight="normal" fill="#adafb1" text-anchor="start" textLength="10.50" lengthAdjust="spacingAndGlyphs" >5.5%</text>
<path d="M597.82 408.20V413.60M598.86 408.20V413.60M597.05 409.19H598.51M597.05 410.54H599.14M597.68 411.62H598.51M597.05 413.26H598.51M600.11 409.01V413.06M601.17 408.20V413.60M599.74 409.09H601.82M599.74 410.04H601.82M599.74 411.36H601.82M599.74 412.85H601.20M602.88 408.20V413.60M604.25 408.20V413.60M602.42 410.28H604.51M603.05 412.56H604.51M605.91 409.01V413.06M606.45 409.82V413.06M605.11 409.07H607.20M605.11 412.71H607.20M608.04 408.20V413.06M609.64 408.20V413.60M607.80 408.95H609.89M608.43 410.55H609.89M607.80 412.65H609.89M610.86 409.01V413.06M612.31 408.20V413.60M610.49 410.18H611.95M611.11 412.24H612.57M613.47 408.20V413.06M614.16 409.01V411.98M614.75 409.01V411.98M613.17 409.05H614.64M613.17 411.08H615.26M613.17 412.62H614.64M616.38 408.20V413.60M617.58 409.82V411.98M615.86 409.23H617.32M616.49 412.92H617.95" fill="none" stroke="#adafb1" stroke-width="0.75"/>
<text x="656.00" y="413.40" font-family="Liberation Sans" font-size="6.6" font-weight="normal" fill="#adafb1" text-anchor="start" textLength="6.00" lengthAdjust="spacingAndGlyphs" >4%</text>
<path d="M662.91 409.01V411.98M663.77 408.20V413.60M664.20 409.01V411.98M663.17 409.94H664.62M662.55 411.51H664.62M665.47 409.01V413.60M666.02 409.82V413.60M666.76 408.20V413.60M665.84 409.00H667.28M665.84 410.44H667.28M665.84 412.37H667.28M668.13 409.01V411.98M669.35 408.20V413.60M667.88 410.12H669.95M667.88 412.19H669.95M671.08 408.20V413.60M671.55 409.01V413.60M672.14 409.82V413.60M670.55 409.21H672.00M670.55 411.01H672.62M670.55 412.22H672.62M673.56 408.20V413.06M675.01 408.20V413.06M673.84 408.88H674.66M673.22 410.73H675.28M673.22 412.86H675.28M676.46 408.20V413.06M677.38 408.20V411.98M676.50 409.19H677.95M675.88 411.09H677.95M675.88 412.71H677.95M678.73 409.01V411.98M680.41 408.20V411.98M679.17 409.63H680.62M678.55 410.90H680.62M678.55 412.42H680.62M681.94 408.20V413.60M682.86 409.82V413.06M681.22 409.12H682.66M681.22 412.45H682.66M684.52 408.20V413.06M685.22 408.20V413.60M683.88 408.63H685.95M684.50 411.06H685.33M683.88 412.35H685.95" fill="none" stroke="#adafb1" stroke-width="0.75"/>
<rect x="5.00" y="555.60" width="791.00" height="41.60" fill="#383838" />
<defs><linearGradient id="gdark" x1="0" y1="0" x2="0" y2="1"><stop offset="0" stop-color="#5a5c5e"/><stop offset="0.55" stop-color="#484a4b"/><stop offset="1" stop-color="#3a3b3c"/></linearGradient></defs>
<rect x="31.00" y="522.40" width="68.50" height="33.20" fill="url(#gdark)" />
<line x1="31.20" y1="522.00" x2="31.20" y2="555.50" stroke="#00ecec" stroke-width="2.3" />
<line x1="85.10" y1="522.40" x2="85.10" y2="553.50" stroke="#5f8c90" stroke-width="1.3" />
<line x1="85.10" y1="553.20" x2="99.00" y2="553.20" stroke="#77797b" stroke-width="1.0" />
<rect x="36.10" y="528.00" width="1.70" height="1.70" fill="#8e8f90" />
<rect x="36.10" y="532.70" width="1.70" height="1.70" fill="#8e8f90" />
<rect x="36.10" y="537.40" width="1.70" height="1.70" fill="#8e8f90" />
<rect x="36.10" y="542.10" width="1.70" height="1.70" fill="#8e8f90" />
<rect x="36.10" y="546.80" width="1.70" height="1.70" fill="#8e8f90" />
<rect x="40.50" y="528.00" width="1.70" height="1.70" fill="#8e8f90" />
<rect x="40.50" y="532.70" width="1.70" height="1.70" fill="#8e8f90" />
<rect x="40.50" y="537.40" width="1.70" height="1.70" fill="#8e8f90" />
<rect x="40.50" y="542.10" width="1.70" height="1.70" fill="#8e8f90" />
<rect x="40.50" y="546.80" width="1.70" height="1.70" fill="#8e8f90" />
<path d="M51.2 534.6 L61 543.6 M61 534.6 L51.2 543.6" stroke="#e4e4e4" stroke-width="1.9" fill="none"/>
<g transform="translate(84.5 539) rotate(-45)"><path d="M-2.3 -3.4 L-2.3 10.2 Q0 12.8 2.3 10.2 L2.3 -3.4 Q6.4 -5.4 5.4 -10.6 L2.4 -10.6 L2.4 -7.0 L-2.4 -7.0 L-2.4 -10.6 L-5.4 -10.6 Q-6.4 -5.4 -2.3 -3.4 Z" fill="#c9cacb" stroke="#3a3b3c" stroke-width="0.7"/></g>
<path d="M101 523.2 L796 523.2 L796 555.2 L101 555.2 Q98.8 555.2 98.8 553 L98.8 525.4 Q98.8 523.2 101 523.2 Z" fill="#bdbec0"/>
<rect x="99.50" y="523.20" width="696.50" height="0.90" fill="#a6a7a9" />
<rect x="99.60" y="552.10" width="661.40" height="2.50" fill="#dedfe0" />
<line x1="761.00" y1="523.50" x2="761.00" y2="554.60" stroke="#9cf2f4" stroke-width="2.0" />
<line x1="779.00" y1="523.50" x2="779.00" y2="555.20" stroke="#3aeef0" stroke-width="2.2" />
<rect x="150.00" y="551.20" width="1.10" height="1.00" fill="#e6e6e6" />
<rect x="180.00" y="551.20" width="1.10" height="1.00" fill="#e6e6e6" />
<rect x="213.00" y="551.20" width="1.10" height="1.00" fill="#e6e6e6" />
<rect x="247.00" y="551.20" width="1.10" height="1.00" fill="#e6e6e6" />
<rect x="280.00" y="551.20" width="1.10" height="1.00" fill="#e6e6e6" />
<rect x="303.00" y="551.20" width="1.10" height="1.00" fill="#e6e6e6" />
<rect x="337.00" y="551.20" width="1.10" height="1.00" fill="#e6e6e6" />
<rect x="360.00" y="551.20" width="1.10" height="1.00" fill="#e6e6e6" />
<rect x="395.00" y="551.20" width="1.10" height="1.00" fill="#e6e6e6" />
<rect x="437.00" y="551.20" width="1.10" height="1.00" fill="#e6e6e6" />
<rect x="470.00" y="551.20" width="1.10" height="1.00" fill="#e6e6e6" />
<rect x="520.00" y="551.20" width="1.10" height="1.00" fill="#e6e6e6" />
<rect x="565.00" y="551.20" width="1.10" height="1.00" fill="#e6e6e6" />
<rect x="640.00" y="551.20" width="1.10" height="1.00" fill="#e6e6e6" />
<rect x="672.00" y="551.20" width="1.10" height="1.00" fill="#e6e6e6" />
<rect x="700.00" y="551.20" width="1.10" height="1.00" fill="#e6e6e6" />
<rect x="730.00" y="551.20" width="1.10" height="1.00" fill="#e6e6e6" />
<rect x="105.4" y="530.2" width="18" height="17" rx="2.2" fill="#9b9d9f" stroke="#a9abad" stroke-width="1"/>
<path d="M109.2 535.4 L114.6 539.2 L109.2 543" stroke="#3c3d3e" stroke-width="1.7" fill="none"/>
<path d="M115 544.2 L120 544.2" stroke="#3c3d3e" stroke-width="1.6"/>
<path d="M127.6 537.3 L135 537.3 L131.3 541 Z" fill="#666768"/>
<g fill="none" stroke="#828385" stroke-width="1.1" stroke-linecap="round" stroke-linejoin="round">
<g transform="translate(148.4 530.4) skewX(-12) scale(0.93)"><path d="M3 0 L0.6 4" vector-effect="non-scaling-stroke"/><path d="M1.8 2.6 L5.6 2.6" vector-effect="non-scaling-stroke"/><path d="M0.8 6 L5.4 6" vector-effect="non-scaling-stroke"/><path d="M0.3 9.5 L5.4 9.5" vector-effect="non-scaling-stroke"/><path d="M3 6 L3 14 L5.8 12" vector-effect="non-scaling-stroke"/><path d="M6.6 4 L9 4 L7 8 L9 8 L6.2 14" vector-effect="non-scaling-stroke"/><path d="M6.8 10 Q9 15 16 14.6" vector-effect="non-scaling-stroke"/><path d="M10 2.5 L15 2.5 L15 7.5" vector-effect="non-scaling-stroke"/><path d="M9.4 5 L16 5" vector-effect="non-scaling-stroke"/><path d="M10 7.5 L15 7.5" vector-effect="non-scaling-stroke"/><path d="M10.2 10 L15.2 10" vector-effect="non-scaling-stroke"/><path d="M9.6 12.5 L15.8 12.5" vector-effect="non-scaling-stroke"/><path d="M12.6 0.4 L12.6 14" vector-effect="non-scaling-stroke"/></g>
<g transform="translate(163.4 530.4) skewX(-12) scale(0.93)"><path d="M4.5 1.4 L8 1.4 Q8 9 1 15" vector-effect="non-scaling-stroke"/><path d="M8 4 Q10 11 15.5 15" vector-effect="non-scaling-stroke"/></g>
<g transform="translate(180.6 530.4) skewX(-12) scale(0.93)"><path d="M8 0.4 L0.5 6.8" vector-effect="non-scaling-stroke"/><path d="M8 0.4 L15.5 6.8" vector-effect="non-scaling-stroke"/><path d="M5 5.8 L11 5.8" vector-effect="non-scaling-stroke"/><path d="M2 8.5 L2 13.4" vector-effect="non-scaling-stroke"/><path d="M2 8.5 L7 8.5 L7 13 L2 13" vector-effect="non-scaling-stroke"/><path d="M9.6 8.5 L14.2 8.5 L14.2 13 L12.8 12.4" vector-effect="non-scaling-stroke"/><path d="M9.6 8.5 L9.6 15.8" vector-effect="non-scaling-stroke"/></g>
<g transform="translate(196.8 530.4) skewX(-12) scale(0.93)"><path d="M8 0.4 L0.5 7.4" vector-effect="non-scaling-stroke"/><path d="M8 0.4 L15.5 7.4" vector-effect="non-scaling-stroke"/><path d="M6.8 5.8 L9.2 7.2" vector-effect="non-scaling-stroke"/><path d="M3.5 9.6 L12.5 9.6 L9 12.6" vector-effect="non-scaling-stroke"/><path d="M8 12.4 L10.6 15.6" vector-effect="non-scaling-stroke"/></g>
</g>
<text x="590.00" y="533.80" font-family="Liberation Sans" font-size="9.6" font-weight="normal" fill="#f6f6f6" text-anchor="start" textLength="4.60" lengthAdjust="spacingAndGlyphs" >3</text>
<text x="595.00" y="533.80" font-family="Liberation Sans" font-size="9.4" font-weight="normal" fill="#f2f2f2" text-anchor="start" textLength="100.00" lengthAdjust="spacingAndGlyphs" >?????????????????????????</text>
<rect x="304.40" y="581.40" width="491.60" height="16.00" fill="#4c4c4c" />
<rect x="304.40" y="581.40" width="491.60" height="1.20" fill="#646464" />
<rect x="304.40" y="581.40" width="1.40" height="16.00" fill="#646464" />
<rect x="340.20" y="582.00" width="1.00" height="15.50" fill="#666666" />
<rect x="341.20" y="582.00" width="1.20" height="15.50" fill="#3c3c3c" />
<rect x="342.40" y="582.00" width="1.00" height="15.50" fill="#666666" />
<rect x="422.30" y="582.00" width="1.00" height="15.50" fill="#666666" />
<rect x="423.30" y="582.00" width="1.20" height="15.50" fill="#3c3c3c" />
<rect x="424.50" y="582.00" width="1.00" height="15.50" fill="#666666" />
<rect x="633.80" y="582.00" width="1.00" height="15.50" fill="#666666" />
<rect x="634.80" y="582.00" width="1.20" height="15.50" fill="#3c3c3c" />
<rect x="636.00" y="582.00" width="1.00" height="15.50" fill="#666666" />
<rect x="767.20" y="582.00" width="1.00" height="15.50" fill="#666666" />
<rect x="768.20" y="582.00" width="1.20" height="15.50" fill="#3c3c3c" />
<rect x="769.40" y="582.00" width="1.00" height="15.50" fill="#666666" />
<rect x="553.40" y="582.00" width="1.10" height="15.50" fill="#6a6a6a" />
<g fill="none" stroke="#ffffff" stroke-width="1.3"><path d="M311.5 594.2 L316.5 594.2 M314 592 L314 597.5 M318 592.6 L325 592.6 M319.6 591.6 L319.6 594 M323.4 591.6 L323.4 594 M318.6 595.6 L324.6 595.6 L324.6 597.5 M318.6 595.6 L318.6 597.5"/><path d="M327.6 592.6 L334.6 592.6 M329.6 592.6 L329.4 597.5 M332.6 592.6 L332.6 597.5 M327.2 595.6 L335 595.6 M336.4 592.4 L336.4 596.5 M338.6 591.6 L338.6 597.5"/></g>
<g stroke="#9c9c9c" stroke-width="1.5"><line x1="351.3" y1="587.8" x2="351.3" y2="597.4"/><line x1="355.6" y1="587.8" x2="355.6" y2="597.4"/><line x1="359.8" y1="587.8" x2="359.8" y2="597.4"/><line x1="364.0" y1="587.8" x2="364.0" y2="597.4"/></g>
<g stroke="#8a8a8a" stroke-width="1.1"><line x1="348.8" y1="590.6" x2="367" y2="590.6"/><line x1="348.8" y1="593.8" x2="367" y2="593.8"/></g>
<rect x="380.00" y="588.50" width="1.70" height="1.50" fill="#8c8c8c" />
<rect x="380.00" y="591.50" width="1.70" height="1.50" fill="#8c8c8c" />
<rect x="380.00" y="594.30" width="1.70" height="1.50" fill="#8c8c8c" />
<rect x="384.20" y="588.50" width="1.70" height="1.50" fill="#8c8c8c" />
<rect x="384.20" y="591.50" width="1.70" height="1.50" fill="#8c8c8c" />
<rect x="384.20" y="594.30" width="1.70" height="1.50" fill="#8c8c8c" />
<rect x="388.40" y="588.50" width="1.70" height="1.50" fill="#8c8c8c" />
<rect x="388.40" y="591.50" width="1.70" height="1.50" fill="#8c8c8c" />
<rect x="388.40" y="594.30" width="1.70" height="1.50" fill="#8c8c8c" />
<rect x="392.60" y="588.50" width="1.70" height="1.50" fill="#8c8c8c" />
<rect x="392.60" y="591.50" width="1.70" height="1.50" fill="#8c8c8c" />
<rect x="392.60" y="594.30" width="1.70" height="1.50" fill="#8c8c8c" />
<path d="M408 594.6 L417 594.6 L412.5 598.8 Z" fill="#f4f4f4"/>
<path d="M490.4 594.6 L499 594.6 L494.7 598.8 Z" fill="#f4f4f4"/>
<path d="M538.8 594.6 L547.6 594.6 L543.2 598.8 Z" fill="#f4f4f4"/>
<path d="M618.8 594.6 L627.6 594.6 L623.2 598.8 Z" fill="#f4f4f4"/>
<path d="M753.2 594.6 L762 594.6 L757.6 598.8 Z" fill="#f4f4f4"/>
<rect x="432.00" y="590.40" width="1.50" height="7.00" fill="#9a9a9a" />
<g fill="none"><path d="M461.2 597.5 A8.6 8.6 0 0 1 477 593.2 M468.5 597.5 L477.5 588.2" stroke="#233f78" stroke-width="4"/><path d="M461.2 597.5 A8.6 8.6 0 0 1 477 593.2 M468.5 597.5 L477.5 588.2" stroke="#1f7ce8" stroke-width="1.7"/></g>
<path d="M509 586.8 L519.2 597.4 M519.4 584.8 L519.4 597.4" stroke="#8c8c8c" stroke-width="1.5" fill="none"/>
<path d="M566.8 597.6 Q572 594.5 575.4 589.8" stroke="#233f78" stroke-width="4" fill="none"/><path d="M566.8 597.6 Q572 594.5 575.4 589.8" stroke="#1f78e4" stroke-width="1.7" fill="none"/>
<path d="M596 589.6 L606.4 589.6 Q608.4 589.6 608.4 591.6 L608.4 597.5" stroke="#233f78" stroke-width="4.2" fill="none"/>
<path d="M596 589.6 L606.4 589.6 Q608.4 589.6 608.4 591.6 L608.4 597.5" stroke="#1f7ce8" stroke-width="1.9" fill="none"/>
<rect x="589.8" y="587.6" width="7.8" height="8.6" rx="1" fill="#0b4a12" stroke="#233f78" stroke-width="1.2"/>
<circle cx="593.8" cy="591.8" r="1.9" fill="#08e010"/>
<g><path d="M646 597.5 L650.8 587.4 L653.2 588.2 L650.6 597.5 Z" fill="#1f74e0" stroke="#233f78" stroke-width="0.9"/><circle cx="655.6" cy="593.2" r="3.3" fill="none" stroke="#233f78" stroke-width="3.8"/><circle cx="655.6" cy="593.2" r="3.3" fill="none" stroke="#1f7ce8" stroke-width="2.2"/></g>
<path d="M686.5 587.6 L682 592 L686 593.4 L682.4 597.5 M689.4 590.6 L687 597.5" stroke="#a8a8a8" stroke-width="1.6" fill="none"/>
<path d="M711 588 Q708.4 592.5 708.2 597.5 L713.8 597.5 Q713.6 592.5 711 588 Z" fill="#b4b4b4"/>
<g fill="#ffffff"><rect x="735.0" y="593.2" width="1.8" height="4.3"/><rect x="733.2" y="594.2" width="2" height="1.3"/><rect x="739.2" y="594.6" width="1.7" height="1.7"/><rect x="744.2" y="593.2" width="1.8" height="4.3"/><rect x="742.4" y="594.2" width="2" height="1.3"/></g>
<g fill="#b4b4b4"><circle cx="785" cy="597.8" r="4.8"/><rect x="-1.4" y="-7.0" width="2.8" height="3" transform="translate(785 597.8) rotate(-72)"/><rect x="-1.4" y="-7.0" width="2.8" height="3" transform="translate(785 597.8) rotate(-36)"/><rect x="-1.4" y="-7.0" width="2.8" height="3" transform="translate(785 597.8) rotate(0)"/><rect x="-1.4" y="-7.0" width="2.8" height="3" transform="translate(785 597.8) rotate(36)"/><rect x="-1.4" y="-7.0" width="2.8" height="3" transform="translate(785 597.8) rotate(72)"/></g>
<circle cx="785" cy="597.5" r="2.2" fill="#4c4c4c"/>
<text x="656.40" y="589.00" font-family="Liberation Serif" font-size="28.4" font-weight="normal" fill="#868686" text-anchor="start" textLength="9.00" lengthAdjust="spacingAndGlyphs" opacity="0.92">w</text>
<text x="665.80" y="589.00" font-family="Liberation Serif" font-size="28.4" font-weight="normal" fill="#868686" text-anchor="start" textLength="9.00" lengthAdjust="spacingAndGlyphs" opacity="0.92">w</text>
<text x="675.20" y="589.00" font-family="Liberation Serif" font-size="28.4" font-weight="normal" fill="#868686" text-anchor="start" textLength="9.00" lengthAdjust="spacingAndGlyphs" opacity="0.92">w</text>
<text x="685.20" y="589.00" font-family="Liberation Serif" font-size="28.4" font-weight="normal" fill="#868686" text-anchor="start" textLength="2.60" lengthAdjust="spacingAndGlyphs" opacity="0.92">.</text>
<text x="697.00" y="589.00" font-family="Liberation Serif" font-size="28.4" font-weight="normal" fill="#868686" text-anchor="start" textLength="7.20" lengthAdjust="spacingAndGlyphs" opacity="0.92">c</text>
<text x="705.60" y="589.00" font-family="Liberation Serif" font-size="28.4" font-weight="normal" fill="#868686" text-anchor="start" textLength="9.60" lengthAdjust="spacingAndGlyphs" opacity="0.92">n</text>
<text x="716.40" y="589.00" font-family="Liberation Serif" font-size="28.4" font-weight="normal" fill="#868686" text-anchor="start" textLength="9.40" lengthAdjust="spacingAndGlyphs" opacity="0.92">d</text>
<text x="727.00" y="589.00" font-family="Liberation Serif" font-size="28.4" font-weight="normal" fill="#868686" text-anchor="start" textLength="8.20" lengthAdjust="spacingAndGlyphs" opacity="0.92">a</text>
<text x="736.00" y="589.00" font-family="Liberation Serif" font-size="28.4" font-weight="normal" fill="#868686" text-anchor="start" textLength="8.60" lengthAdjust="spacingAndGlyphs" opacity="0.92">o</text>
<text x="746.40" y="589.00" font-family="Liberation Serif" font-size="28.4" font-weight="normal" fill="#868686" text-anchor="start" textLength="2.60" lengthAdjust="spacingAndGlyphs" opacity="0.92">.</text>
<text x="757.00" y="589.00" font-family="Liberation Serif" font-size="28.4" font-weight="normal" fill="#868686" text-anchor="start" textLength="7.20" lengthAdjust="spacingAndGlyphs" opacity="0.92">c</text>
<text x="765.20" y="589.00" font-family="Liberation Serif" font-size="28.4" font-weight="normal" fill="#868686" text-anchor="start" textLength="8.60" lengthAdjust="spacingAndGlyphs" opacity="0.92">o</text>
<text x="773.60" y="589.00" font-family="Liberation Serif" font-size="28.4" font-weight="normal" fill="#868686" text-anchor="start" textLength="11.60" lengthAdjust="spacingAndGlyphs" opacity="0.92">m</text>
<g fill="none" stroke="#96989a" stroke-width="1.7" stroke-linecap="round" stroke-linejoin="round">
<path d="M6.2 7.4 L6.8 13.2"/><path d="M6.2 7.4 L16 6.6 L15 12.4"/><path d="M7 12.9 L15 12.3"/><path d="M9.9 1.6 L9.9 22.6"/><path d="M25.6 5.6 L25 20.4"/><path d="M25.6 5.6 L35 4.8 L35.2 21.6 L33.4 20.4"/><path d="M27.6 9 L33 8.6"/><path d="M28 12.6 L32.6 12.3"/><path d="M27 16.6 L33.4 16.1"/><path d="M30.2 8.8 L30.2 16.3"/><path d="M31.9 13.4 L32.8 14.9"/><path d="M25 19.9 L35 19.3"/><path d="M49 3.6 L50.4 5.6"/><path d="M54.6 3 L53 5.6"/><path d="M47.4 7.1 L57.6 6.5"/><path d="M52.2 7 L51 9.2"/><path d="M49.6 9.6 L49.6 18"/><path d="M49.6 9.6 L56 9.2 L56 18"/><path d="M49.6 12.3 L56 12"/><path d="M49.6 15.1 L56 14.8"/><path d="M49.6 18 L56 17.8"/><path d="M44 5.8 L45.6 7.8"/><path d="M43 11 L46 10.8 L45.6 17.4 Q44.6 19 43 20.6"/><path d="M45.4 18.4 Q50 21.6 58.6 21.2"/><path d="M60.6 9 L68 8.5"/><path d="M64.6 3 L64.6 22"/><path d="M64.4 10 L60.6 17"/><path d="M64.8 11 L67.6 14"/><path d="M76 4 L69.6 6.8"/><path d="M68.6 9.8 L78.6 9.4"/><path d="M73.5 6.5 Q73 12 68 15.6"/><path d="M73.8 9.8 Q75.6 13.6 79 15"/><path d="M71.6 14 Q71.6 19 69.6 22"/><path d="M75.8 14 L75.8 22.2"/><path d="M84 5.8 L83.8 21.6"/><path d="M84 5.8 L95.6 5.2 L95.6 21 L94 20.2"/><path d="M86 9.6 L89 16"/><path d="M89 9 L85.8 17"/><path d="M90.6 9.6 L93.6 16"/><path d="M93.6 9 L90.2 17"/>
</g>
</svg>
</body></html>
